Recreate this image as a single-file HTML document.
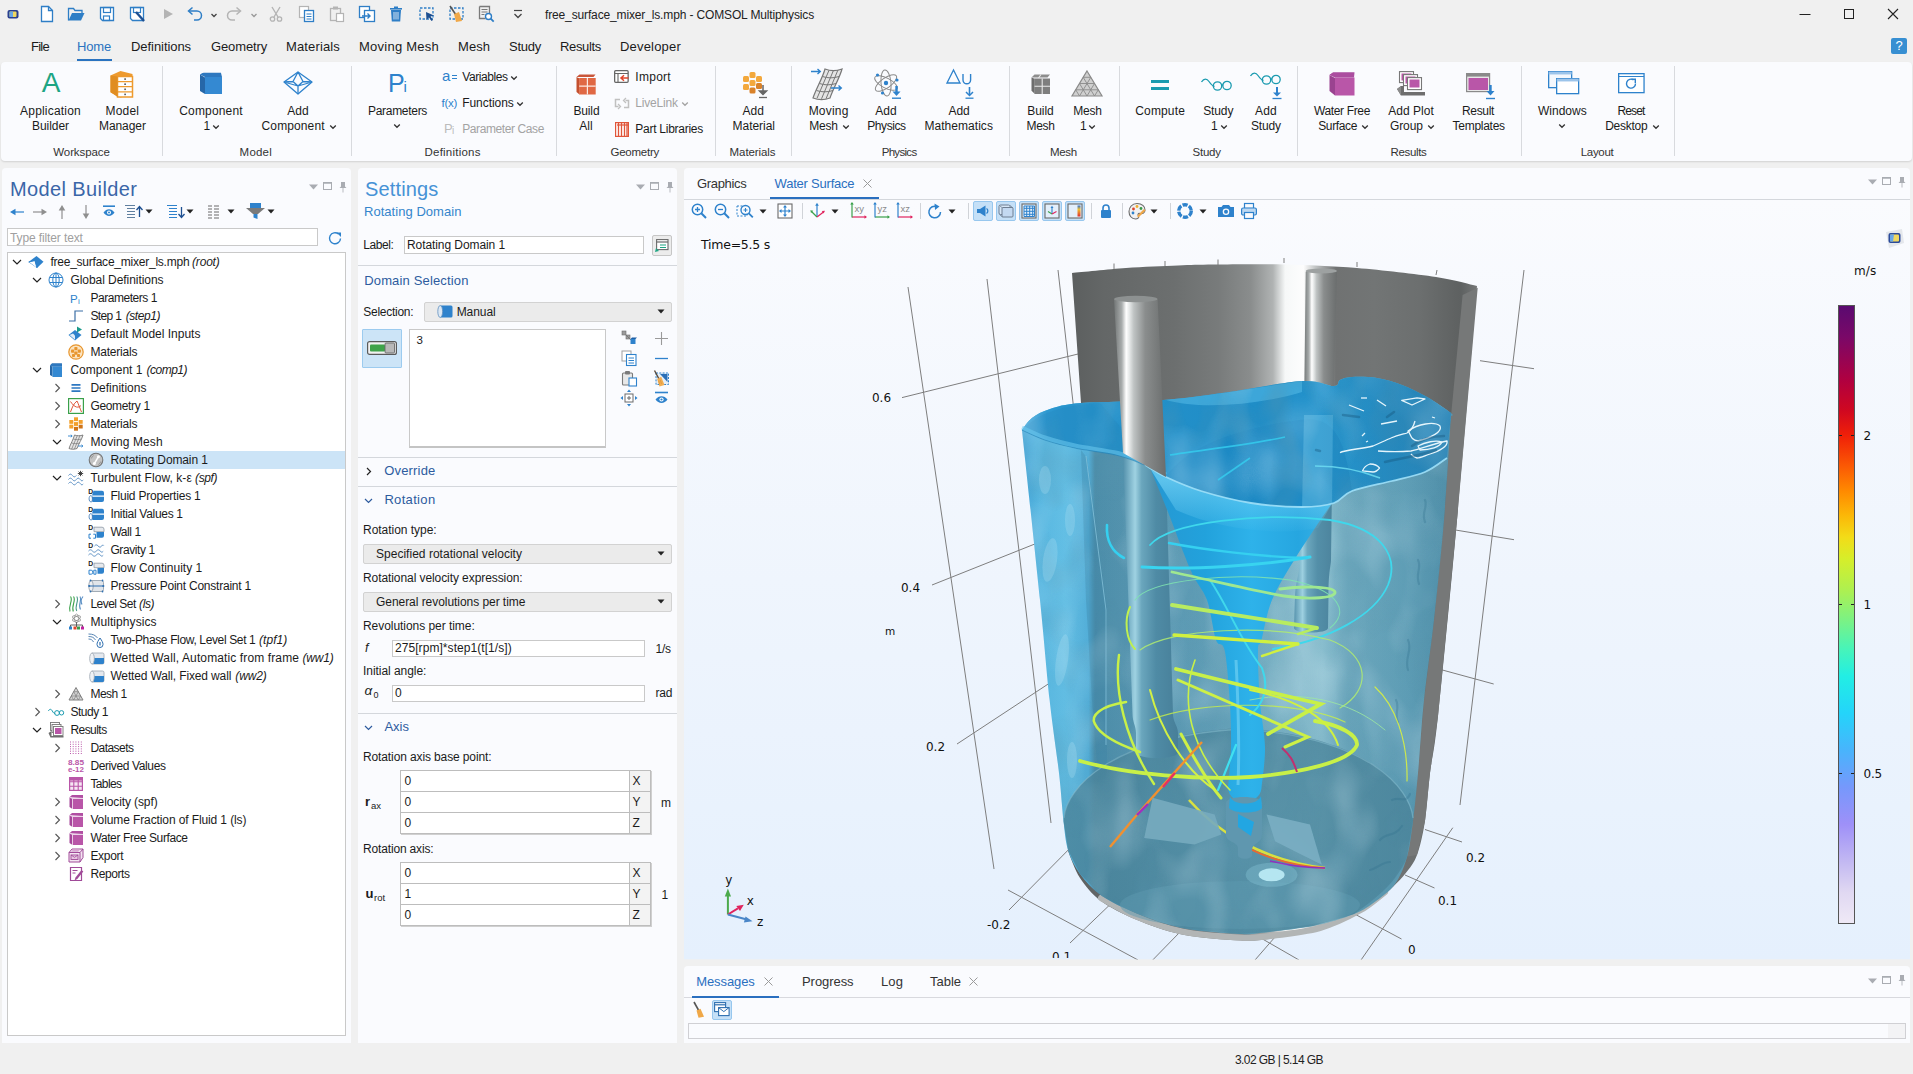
<!DOCTYPE html>
<html lang="en"><head><meta charset="utf-8"><title>free_surface_mixer_ls.mph - COMSOL Multiphysics</title>
<style>
html,body{margin:0;padding:0}
body{width:1913px;height:1074px;overflow:hidden;position:relative;background:#f0f0f0;font-family:"Liberation Sans",sans-serif;font-size:12px;line-height:16px;color:#1b1b1b}
.t{position:absolute;white-space:nowrap}
.p{position:absolute;background:#fafbfe;border-radius:4px 4px 0 0}
.hl{position:absolute;height:1px;background:#d4d7dc}
.in{position:absolute;background:#fff;border:1px solid #c9c9c9;box-sizing:border-box}
.cb{position:absolute;background:#ebebeb;border:1px solid #d2d2d2;border-radius:2px;box-sizing:border-box}
svg{overflow:visible}
</style></head>
<body>
<svg style="position:absolute;left:3px;top:4px;" width="20" height="20" viewBox="0 0 20 20"><rect x="4.500" y="6" width="11" height="8.500" rx="2" fill="#2a3f8f"/><rect x="6.500" y="7.500" width="7" height="5.500" rx="1" fill="#f0d860"/><rect x="6.500" y="7.500" width="3.500" height="5.500" fill="#6aa8e8"/></svg>
<svg style="position:absolute;left:36.5px;top:3.5px;" width="20" height="20" viewBox="0 0 20 20"><path d="M4.5 2.5h7l4 4v11h-11z" fill="#fff" stroke="#2e7ec6" stroke-width="1.3"/><path d="M11.5 2.5v4h4" fill="none" stroke="#2e7ec6" stroke-width="1.3"/></svg>
<svg style="position:absolute;left:66px;top:3.5px;" width="20" height="20" viewBox="0 0 20 20"><path d="M2.5 16.5v-12h5l1.5 2h7v2.5" fill="none" stroke="#2e7ec6" stroke-width="1.3"/><path d="M2.5 16.5l3.5-7.5h12.5l-3.5 7.5z" fill="#2e7ec6"/></svg>
<svg style="position:absolute;left:96.5px;top:3.5px;" width="20" height="20" viewBox="0 0 20 20"><path d="M3.5 3.5h13v13h-11l-2-2z" fill="#fff" stroke="#2e7ec6" stroke-width="1.3"/><rect x="6.5" y="3.5" width="7" height="5" fill="none" stroke="#2e7ec6" stroke-width="1.2"/><rect x="6.5" y="12" width="6" height="4.5" fill="none" stroke="#2e7ec6" stroke-width="1.2"/></svg>
<svg style="position:absolute;left:127px;top:3.5px;" width="20" height="20" viewBox="0 0 20 20"><path d="M3.5 3.5h13v13h-11l-2-2z" fill="#fff" stroke="#2e7ec6" stroke-width="1.3"/><rect x="6.5" y="3.5" width="7" height="5" fill="none" stroke="#2e7ec6" stroke-width="1.2"/><path d="M9 8l8 9" stroke="#1d4f91" stroke-width="2.4"/></svg>
<svg style="position:absolute;left:158px;top:3.5px;" width="20" height="20" viewBox="0 0 20 20"><path d="M6 5l9 5-9 5z" fill="#b4b4b4"/></svg>
<svg style="position:absolute;left:184.5px;top:3.5px;" width="20" height="20" viewBox="0 0 20 20"><path d="M4 7h8a4.5 4.5 0 0 1 0 9h-3" fill="none" stroke="#2e7ec6" stroke-width="1.5"/><path d="M7.5 3.5l-4 3.5 4 3.5" fill="none" stroke="#2e7ec6" stroke-width="1.5"/></svg>
<svg style="position:absolute;left:203.5px;top:4.5px;" width="20" height="20" viewBox="0 0 20 20"><path d="M7.5 9l2.5 2.5 2.5-2.5" fill="none" stroke="#444" stroke-width="1.3"/></svg>
<svg style="position:absolute;left:224px;top:3.5px;" width="20" height="20" viewBox="0 0 20 20"><path d="M16 7h-8a4.5 4.5 0 0 0 0 9h3" fill="none" stroke="#b4b4b4" stroke-width="1.5"/><path d="M12.5 3.5l4 3.5-4 3.5" fill="none" stroke="#b4b4b4" stroke-width="1.5"/></svg>
<svg style="position:absolute;left:243.5px;top:4.5px;" width="20" height="20" viewBox="0 0 20 20"><path d="M7.5 9l2.5 2.5 2.5-2.5" fill="none" stroke="#999" stroke-width="1.3"/></svg>
<svg style="position:absolute;left:266px;top:3.5px;" width="20" height="20" viewBox="0 0 20 20"><path d="M6 3l6 10M14 3l-6 10" stroke="#b4b4b4" stroke-width="1.4"/><circle cx="6.5" cy="15" r="2.2" fill="none" stroke="#b4b4b4" stroke-width="1.3"/><circle cx="13.500" cy="15" r="2.2" fill="none" stroke="#b4b4b4" stroke-width="1.3"/></svg>
<svg style="position:absolute;left:297px;top:3.5px;" width="20" height="20" viewBox="0 0 20 20"><rect x="2.500" y="2.5" width="9" height="11" fill="#fff" stroke="#b4b4b4" stroke-width="1.2"/><rect x="7.5" y="6.5" width="9" height="11" fill="#fff" stroke="#2e7ec6" stroke-width="1.3"/><path d="M9.500 10h5M9.500 12.500h5M9.500 15h5" stroke="#2e7ec6" stroke-width="1"/></svg>
<svg style="position:absolute;left:327px;top:3.5px;" width="20" height="20" viewBox="0 0 20 20"><rect x="3.5" y="4.5" width="10" height="12" fill="none" stroke="#b4b4b4" stroke-width="1.3"/><rect x="6" y="2.500" width="5" height="3" fill="#b4b4b4"/><rect x="9.500" y="9.500" width="7" height="8" fill="#fff" stroke="#b4b4b4" stroke-width="1.2"/></svg>
<svg style="position:absolute;left:357px;top:3.5px;" width="20" height="20" viewBox="0 0 20 20"><rect x="2.5" y="2.5" width="10" height="11" fill="#fff" stroke="#2e7ec6" stroke-width="1.3"/><rect x="7.5" y="6.500" width="10" height="11" fill="#fff" stroke="#2e7ec6" stroke-width="1.3"/><path d="M5 12h8M10.500 9.500l2.500 2.500-2.500 2.500" fill="none" stroke="#2e7ec6" stroke-width="1.4"/></svg>
<svg style="position:absolute;left:386px;top:3.5px;" width="20" height="20" viewBox="0 0 20 20"><path d="M5 6h10l-.8 11.500h-8.400z" fill="#2e7ec6"/><rect x="4" y="4" width="12" height="1.600" fill="#2e7ec6"/><rect x="8" y="2.500" width="4" height="1.500" fill="#2e7ec6"/><path d="M8 8v7.500M10 8v7.500M12 8v7.500" stroke="#fff" stroke-width=".8"/></svg>
<svg style="position:absolute;left:417px;top:3.5px;" width="20" height="20" viewBox="0 0 20 20"><rect x="3" y="4" width="13" height="11" fill="none" stroke="#2e7ec6" stroke-width="1.3" stroke-dasharray="2.500 1.500"/><path d="M9 8l8 3.500-3.500 1 2.500 3.500-1.500 1-2.500-3.500-2.500 2.500z" fill="#1d4f91"/></svg>
<svg style="position:absolute;left:446px;top:3.5px;" width="20" height="20" viewBox="0 0 20 20"><rect x="4" y="4" width="13" height="11" fill="none" stroke="#2e7ec6" stroke-width="1.3" stroke-dasharray="2.500 1.500"/><path d="M4 2l6 9" stroke="#555" stroke-width="1.600"/><path d="M8 10l5-2 3 9-6 1z" fill="#f0a848"/></svg>
<svg style="position:absolute;left:476px;top:3.5px;" width="20" height="20" viewBox="0 0 20 20"><path d="M3.500 2.500h10v7M3.500 2.500v12h6" fill="none" stroke="#7a7a7a" stroke-width="1.300"/><path d="M5.500 5.500h6M5.500 8h6M5.500 10.500h3" stroke="#7a7a7a" stroke-width="1"/><circle cx="12.500" cy="12.500" r="3" fill="#fff" stroke="#2e7ec6" stroke-width="1.400"/><path d="M14.700 14.700l3 3" stroke="#2e7ec6" stroke-width="1.800"/></svg>
<svg style="position:absolute;left:508px;top:3.5px;" width="20" height="20" viewBox="0 0 20 20"><path d="M6 6.500h8" stroke="#444" stroke-width="1.200"/><path d="M6.500 10l3.500 3.500 3.500-3.500" fill="none" stroke="#444" stroke-width="1.300"/></svg>
<div class="t" style="top:7px;left:545px;color:#222;letter-spacing:-0.14px;">free_surface_mixer_ls.mph - COMSOL Multiphysics</div>
<svg style="position:absolute;left:1795px;top:4px;" width="20" height="20" viewBox="0 0 20 20"><path d="M4.500 10.500h11" stroke="#222" stroke-width="1"/></svg>
<svg style="position:absolute;left:1839px;top:4px;" width="20" height="20" viewBox="0 0 20 20"><rect x="5.500" y="5.500" width="9" height="9" fill="none" stroke="#222" stroke-width="1"/></svg>
<svg style="position:absolute;left:1883px;top:4px;" width="20" height="20" viewBox="0 0 20 20"><path d="M5 5l10 10M15 5l-10 10" stroke="#222" stroke-width="1.100"/></svg>
<div class="t" style="top:37.5px;left:31px;font-size:13px;line-height:18px;color:#1b1b1b;letter-spacing:-0.74px;">File</div>
<div class="t" style="top:37.5px;left:77px;font-size:13px;line-height:18px;color:#2a73c0;letter-spacing:-0.17px;">Home</div>
<div class="t" style="top:37.5px;left:131px;font-size:13px;line-height:18px;color:#1b1b1b;letter-spacing:-0.06px;">Definitions</div>
<div class="t" style="top:37.5px;left:211px;font-size:13px;line-height:18px;color:#1b1b1b;letter-spacing:-0.13px;">Geometry</div>
<div class="t" style="top:37.5px;left:286px;font-size:13px;line-height:18px;color:#1b1b1b;letter-spacing:0.14px;">Materials</div>
<div class="t" style="top:37.5px;left:359px;font-size:13px;line-height:18px;color:#1b1b1b;letter-spacing:0.24px;">Moving Mesh</div>
<div class="t" style="top:37.5px;left:458px;font-size:13px;line-height:18px;color:#1b1b1b;letter-spacing:0.05px;">Mesh</div>
<div class="t" style="top:37.5px;left:509px;font-size:13px;line-height:18px;color:#1b1b1b;letter-spacing:-0.25px;">Study</div>
<div class="t" style="top:37.5px;left:560px;font-size:13px;line-height:18px;color:#1b1b1b;letter-spacing:-0.34px;">Results</div>
<div class="t" style="top:37.5px;left:620px;font-size:13px;line-height:18px;color:#1b1b1b;letter-spacing:0.19px;">Developer</div>
<div style="position:absolute;left:77px;top:58.5px;width:35px;height:2px;background:#2a73c0"></div>
<div style="position:absolute;left:1891px;top:38px;width:16px;height:16px;background:#378fd2;border-radius:2px;color:#fff;font-size:13px;line-height:16px;text-align:center">?</div>
<div style="position:absolute;left:1px;top:61.5px;width:1910.5px;height:99.2px;background:#fafbfe;border-radius:4px;box-shadow:0 1px 2px rgba(0,0,0,.13)"></div>
<div style="position:absolute;left:162.3px;top:66px;width:1px;height:90px;background:#d8dade"></div>
<div style="position:absolute;left:351px;top:66px;width:1px;height:90px;background:#d8dade"></div>
<div style="position:absolute;left:556px;top:66px;width:1px;height:90px;background:#d8dade"></div>
<div style="position:absolute;left:715px;top:66px;width:1px;height:90px;background:#d8dade"></div>
<div style="position:absolute;left:791px;top:66px;width:1px;height:90px;background:#d8dade"></div>
<div style="position:absolute;left:1009px;top:66px;width:1px;height:90px;background:#d8dade"></div>
<div style="position:absolute;left:1118.5px;top:66px;width:1px;height:90px;background:#d8dade"></div>
<div style="position:absolute;left:1297px;top:66px;width:1px;height:90px;background:#d8dade"></div>
<div style="position:absolute;left:1521px;top:66px;width:1px;height:90px;background:#d8dade"></div>
<div style="position:absolute;left:1674px;top:66px;width:1px;height:90px;background:#d8dade"></div>
<div class="t" style="top:144px;left:53.3px;font-size:11.5px;color:#333;letter-spacing:-0.10px;">Workspace</div>
<div class="t" style="top:144px;left:239.6px;font-size:11.5px;color:#333;letter-spacing:0.22px;">Model</div>
<div class="t" style="top:144px;left:424.5px;font-size:11.5px;color:#333;letter-spacing:0.22px;">Definitions</div>
<div class="t" style="top:144px;left:610.5px;font-size:11.5px;color:#333;letter-spacing:-0.25px;">Geometry</div>
<div class="t" style="top:144px;left:729.6px;font-size:11.5px;color:#333;letter-spacing:-0.09px;">Materials</div>
<div class="t" style="top:144px;left:881.7px;font-size:11.5px;color:#333;letter-spacing:-0.69px;">Physics</div>
<div class="t" style="top:144px;left:1050px;font-size:11.5px;color:#333;letter-spacing:-0.33px;">Mesh</div>
<div class="t" style="top:144px;left:1192.5px;font-size:11.5px;color:#333;letter-spacing:-0.22px;">Study</div>
<div class="t" style="top:144px;left:1390.6px;font-size:11.5px;color:#333;letter-spacing:-0.36px;">Results</div>
<div class="t" style="top:144px;left:1580.7px;font-size:11.5px;color:#333;letter-spacing:-0.29px;">Layout</div>
<div class="t" style="top:102.5px;left:20.1px;letter-spacing:0.19px;">Application</div>
<div class="t" style="top:117.5px;left:32px;letter-spacing:-0.05px;">Builder</div>
<div class="t" style="top:102.5px;left:105.4px;letter-spacing:0.24px;">Model</div>
<div class="t" style="top:117.5px;left:99px;letter-spacing:-0.08px;">Manager</div>
<div class="t" style="top:102.5px;left:179.3px;letter-spacing:0.15px;">Component</div>
<div class="t" style="top:117.5px;left:203.6px;letter-spacing:-1.67px;">1</div>
<div class="t" style="top:102.5px;left:287.3px;letter-spacing:-0.02px;">Add</div>
<div class="t" style="top:117.5px;left:261.6px;letter-spacing:0.11px;">Component</div>
<div class="t" style="top:102.5px;left:368px;letter-spacing:-0.30px;">Parameters</div>
<div class="t" style="top:102.5px;left:573.4px;letter-spacing:-0.12px;">Build</div>
<div class="t" style="top:117.5px;left:579.2px;letter-spacing:0.05px;">All</div>
<div class="t" style="top:102.5px;left:742.4px;letter-spacing:0.05px;">Add</div>
<div class="t" style="top:117.5px;left:732.6px;letter-spacing:-0.04px;">Material</div>
<div class="t" style="top:102.5px;left:808.7px;letter-spacing:0.19px;">Moving</div>
<div class="t" style="top:117.5px;left:809.3px;letter-spacing:-0.21px;">Mesh</div>
<div class="t" style="top:102.5px;left:875.3px;letter-spacing:0.02px;">Add</div>
<div class="t" style="top:117.5px;left:867.2px;letter-spacing:-0.41px;">Physics</div>
<div class="t" style="top:102.5px;left:948.6px;letter-spacing:-0.12px;">Add</div>
<div class="t" style="top:117.5px;left:924.4px;letter-spacing:0.05px;">Mathematics</div>
<div class="t" style="top:102.5px;left:1027.3px;letter-spacing:-0.08px;">Build</div>
<div class="t" style="top:117.5px;left:1026.4px;letter-spacing:-0.26px;">Mesh</div>
<div class="t" style="top:102.5px;left:1073.3px;letter-spacing:-0.21px;">Mesh</div>
<div class="t" style="top:117.5px;left:1080px;letter-spacing:-1.67px;">1</div>
<div class="t" style="top:102.5px;left:1135.3px;letter-spacing:0.14px;">Compute</div>
<div class="t" style="top:102.5px;left:1203.2px;letter-spacing:-0.12px;">Study</div>
<div class="t" style="top:117.5px;left:1211px;letter-spacing:-1.67px;">1</div>
<div class="t" style="top:102.5px;left:1255px;letter-spacing:0.15px;">Add</div>
<div class="t" style="top:117.5px;left:1250.9px;letter-spacing:-0.12px;">Study</div>
<div class="t" style="top:102.5px;left:1314px;letter-spacing:-0.36px;">Water Free</div>
<div class="t" style="top:117.5px;left:1318.2px;letter-spacing:-0.37px;">Surface</div>
<div class="t" style="top:102.5px;left:1388.2px;letter-spacing:0.03px;">Add Plot</div>
<div class="t" style="top:117.5px;left:1390px;letter-spacing:-0.11px;">Group</div>
<div class="t" style="top:102.5px;left:1462px;letter-spacing:-0.34px;">Result</div>
<div class="t" style="top:117.5px;left:1452.6px;letter-spacing:-0.28px;">Templates</div>
<div class="t" style="top:102.5px;left:1538px;">Windows</div>
<div class="t" style="top:102.5px;left:1617.4px;letter-spacing:-0.85px;">Reset</div>
<div class="t" style="top:117.5px;left:1605.2px;letter-spacing:-0.25px;">Desktop</div>
<svg style="position:absolute;left:212.4px;top:123.5px;" width="8" height="6" viewBox="0 0 8 6"><path d="M1.200 1.500l2.800 2.800 2.800-2.800" fill="none" stroke="#333" stroke-width="1.300"/></svg>
<svg style="position:absolute;left:328.7px;top:123.5px;" width="8" height="6" viewBox="0 0 8 6"><path d="M1.200 1.500l2.800 2.800 2.800-2.800" fill="none" stroke="#333" stroke-width="1.300"/></svg>
<svg style="position:absolute;left:393.4px;top:123px;" width="8" height="6" viewBox="0 0 8 6"><path d="M1.200 1.500l2.800 2.800 2.800-2.800" fill="none" stroke="#333" stroke-width="1.300"/></svg>
<svg style="position:absolute;left:841.7px;top:123.5px;" width="8" height="6" viewBox="0 0 8 6"><path d="M1.200 1.500l2.800 2.800 2.800-2.800" fill="none" stroke="#333" stroke-width="1.300"/></svg>
<svg style="position:absolute;left:1088.2px;top:123.5px;" width="8" height="6" viewBox="0 0 8 6"><path d="M1.200 1.500l2.800 2.800 2.800-2.800" fill="none" stroke="#333" stroke-width="1.300"/></svg>
<svg style="position:absolute;left:1219.8px;top:123.5px;" width="8" height="6" viewBox="0 0 8 6"><path d="M1.200 1.500l2.800 2.800 2.800-2.800" fill="none" stroke="#333" stroke-width="1.300"/></svg>
<svg style="position:absolute;left:1360.7px;top:123.5px;" width="8" height="6" viewBox="0 0 8 6"><path d="M1.200 1.500l2.800 2.800 2.800-2.800" fill="none" stroke="#333" stroke-width="1.300"/></svg>
<svg style="position:absolute;left:1426.9px;top:123.5px;" width="8" height="6" viewBox="0 0 8 6"><path d="M1.200 1.500l2.800 2.800 2.800-2.800" fill="none" stroke="#333" stroke-width="1.300"/></svg>
<svg style="position:absolute;left:1558px;top:123px;" width="8" height="6" viewBox="0 0 8 6"><path d="M1.200 1.500l2.800 2.800 2.800-2.800" fill="none" stroke="#333" stroke-width="1.300"/></svg>
<svg style="position:absolute;left:1651.8px;top:123.5px;" width="8" height="6" viewBox="0 0 8 6"><path d="M1.200 1.500l2.800 2.800 2.800-2.800" fill="none" stroke="#333" stroke-width="1.300"/></svg>
<div class="t" style="top:69px;left:462.2px;letter-spacing:-0.42px;">Variables</div>
<svg style="position:absolute;left:510.4px;top:75px;" width="8" height="6" viewBox="0 0 8 6"><path d="M1.200 1.500l2.800 2.800 2.800-2.800" fill="none" stroke="#333" stroke-width="1.300"/></svg>
<div class="t" style="top:95px;left:462.2px;letter-spacing:-0.05px;">Functions</div>
<svg style="position:absolute;left:516.2px;top:101px;" width="8" height="6" viewBox="0 0 8 6"><path d="M1.200 1.500l2.800 2.800 2.800-2.800" fill="none" stroke="#333" stroke-width="1.300"/></svg>
<div class="t" style="top:121px;left:462.2px;color:#a3a3a3;letter-spacing:-0.40px;">Parameter Case</div>
<div class="t" style="top:69px;left:635.3px;letter-spacing:0.28px;">Import</div>
<div class="t" style="top:95px;left:635.3px;color:#a3a3a3;letter-spacing:-0.18px;">LiveLink</div>
<svg style="position:absolute;left:680.6px;top:101px;" width="8" height="6" viewBox="0 0 8 6"><path d="M1.200 1.500l2.800 2.800 2.800-2.800" fill="none" stroke="#a3a3a3" stroke-width="1.300"/></svg>
<div class="t" style="top:121px;left:635.3px;letter-spacing:-0.26px;">Part Libraries</div>
<div class="t" style="top:68px;left:41.7px;font-size:28px;line-height:30px;color:#1ea583;">A</div>
<svg style="position:absolute;left:109px;top:70px;" width="26" height="28" viewBox="0 0 26 28"><path d="M1.500 5.500l10-4.500 12 3v20l-12 3.500-10-5z" fill="#ee9a2e"/><path d="M8.500 6.500h15v20.500h-15z" fill="#fff" stroke="#ee9a2e" stroke-width="1.500"/><path d="M8.500 11.600h15M8.500 16.700h15M8.500 21.800h15" stroke="#ee9a2e" stroke-width="1.300"/><g fill="#555"><rect x="15.300" y="8.300" width="1.600" height="1.600"/><rect x="15.300" y="13.400" width="1.600" height="1.600"/><rect x="15.300" y="18.500" width="1.600" height="1.600"/><rect x="15.300" y="23.600" width="1.600" height="1.600"/></g><path d="M1.500 5.500l7 1v20.500l-7-5z" fill="#e08d22"/></svg>
<svg style="position:absolute;left:199px;top:72px;" width="24" height="23" viewBox="0 0 24 23"><path d="M1 2.500l3.500-1.800h17.500v3z" fill="#2b6fb5"/><path d="M1 2.500l5 3v16.500l-5-3z" fill="#2667a8"/><rect x="6" y="5" width="17" height="17" fill="#3489d2"/><path d="M1 2.500l3-1.500h18l1 4h-17z" fill="#2e78bf"/></svg>
<svg style="position:absolute;left:283px;top:71px;" width="30" height="24" viewBox="0 0 30 24"><g fill="none" stroke="#2e82cc" stroke-width="1.300" stroke-linejoin="round"><path d="M15 1l14 10-14 12-14-12z"/><path d="M1 11l14 4 14-4M15 15v8M15 1l-5 9.500M15 1l5 9.500M10 10.500l5 4.500 5-4.500M10 10.500l-9 .5M20 10.500l9 .5"/></g></svg>
<div class="t" style="top:68.5px;left:388px;font-size:25px;line-height:28px;color:#2e82cc;">P</div>
<div class="t" style="top:78px;left:403.5px;font-size:15px;line-height:18px;color:#2e82cc;">i</div>
<div class="t" style="top:68px;left:442px;font-size:15px;color:#2e82cc;">a</div>
<div style="position:absolute;left:451.5px;top:74.5px;width:5px;height:1.3px;background:#2e82cc"></div>
<div style="position:absolute;left:451.5px;top:78.2px;width:5px;height:1.3px;background:#2e82cc"></div>
<div class="t" style="top:95px;left:441.5px;font-size:11.5px;color:#2e82cc;letter-spacing:-0.28px;">f(x)</div>
<div class="t" style="top:121px;left:444px;font-size:13px;color:#bcbcbc;">P</div>
<div class="t" style="top:123px;left:452px;font-size:10px;color:#bcbcbc;">i</div>
<svg style="position:absolute;left:576px;top:74px;" width="20" height="21" viewBox="0 0 20 21"><path d="M.500 3l3-2.500h16l-2 2.500z" fill="#c9563a"/><path d="M.500 3l3 1.500v16l-3-2.500z" fill="#c4502f"/><rect x="3.200" y="4" width="16.500" height="16.500" fill="#e06844"/><path d="M11.400 4v16.500M3.200 12.200h16.500" stroke="#fbe9e2" stroke-width="1.200"/></svg>
<svg style="position:absolute;left:614px;top:70px;" width="15" height="14" viewBox="0 0 15 14"><rect x=".650" y=".650" width="13.500" height="11.700" rx="1" fill="#fff" stroke="#666" stroke-width="1.300"/><path d="M.650 3.500h13.500M4 3.500v9" stroke="#666" stroke-width="1.100"/><path d="M14.500 8h-7M10 5.300l-3 2.700 3 2.700" fill="none" stroke="#e0452c" stroke-width="1.500"/></svg>
<svg style="position:absolute;left:614px;top:97px;" width="16" height="13" viewBox="0 0 16 13"><g fill="none" stroke="#c0c0c0" stroke-width="1.500"><path d="M6 2.500h-4.500v7h3"/><path d="M10 10.500h4.500v-7h-3"/><path d="M4 7l2.500 2.500-2.500 2.500M12 6l-2.500-2.500 2.500-2.500" stroke-width="1.300"/></g></svg>
<svg style="position:absolute;left:615px;top:122px;" width="14" height="15" viewBox="0 0 14 15"><rect x=".600" y=".600" width="12.800" height="13.800" fill="#fff" stroke="#e0553a" stroke-width="1.200"/><path d="M3.500 1v13M6.500 1v13M9.500 1v13M12 1v13" stroke="#e0553a" stroke-width="1.300"/><path d="M2 3h11" stroke="#e0553a" stroke-width="1.200"/></svg>
<svg style="position:absolute;left:742px;top:72px;" width="26" height="27" viewBox="0 0 26 27"><g fill="#f3a83c"><rect x="7.500" y="0" width="6" height="6" rx="1.500"/><rect x="1" y="4" width="6" height="6" rx="1.500"/><rect x="14" y="4" width="6" height="6" rx="1.500"/><rect x="7.500" y="8" width="6" height="6" rx="1.500"/><rect x="1" y="12" width="6" height="6" rx="1.500"/></g><g fill="#d9822a"><rect x="14" y="11" width="6" height="6" rx="1.500"/><rect x="7.500" y="15.500" width="6" height="6" rx="1.500"/></g><path d="M21 13v9M17.500 19l3.500 3.500 3.500-3.500z" stroke="#666" stroke-width="1.500" fill="#666"/><path d="M17 25.500h8" stroke="#666" stroke-width="1.300"/></svg>
<svg style="position:absolute;left:811px;top:68px;" width="32" height="31" viewBox="0 0 32 31"><path d="M14 1c5 2 12 2 17 0-2 8-9 20-12 29-5 2-12 2-17 0 3-9 10-21 12-29z" fill="#e4e4e4" stroke="#777" stroke-width="1.200"/><path d="M18 2.300l-12 28M22.500 2.300l-12 28.500M27 1.800l-12 29M11.500 8.500c5 1.800 11 1.800 16.500 0M8.500 15.500c5 1.800 11 1.800 16.500 0M5.500 22.500c5 1.800 11 1.800 16.500 0" fill="none" stroke="#777" stroke-width="1"/><path d="M0 3.500h9M6.500 1l2.800 2.500-2.800 2.500M20 20h10M27.500 17.500l2.800 2.500-2.800 2.500" fill="none" stroke="#2e82cc" stroke-width="1.400"/></svg>
<svg style="position:absolute;left:873px;top:69px;" width="29" height="30" viewBox="0 0 29 30"><g fill="none" stroke="#8a8a8a" stroke-width="1"><ellipse cx="13" cy="14" rx="12.500" ry="5" transform="rotate(28 13 14)"/><ellipse cx="13" cy="14" rx="12.500" ry="5" transform="rotate(-35 13 14)"/><ellipse cx="13" cy="14" rx="5" ry="13" transform="rotate(-5 13 14)"/></g><g fill="#2e82cc"><circle cx="13" cy="14" r="2.200"/><circle cx="4.500" cy="6" r="1.600"/><circle cx="24" cy="11" r="1.600"/><circle cx="9.500" cy="24" r="1.600"/></g><path d="M23.500 17v8" stroke="#2e82cc" stroke-width="2.400"/><path d="M19.500 22.500h8l-4 4.500z" fill="#2e82cc"/><path d="M19 29.200h9" stroke="#2e82cc" stroke-width="1.400"/></svg>
<svg style="position:absolute;left:946px;top:69px;" width="28" height="30" viewBox="0 0 28 30"><path d="M1 14l6.500-13 6.500 13z" fill="none" stroke="#2e82cc" stroke-width="1.300"/><path d="M17 5v6a3.800 3.800 0 0 0 7.600 0v-6" fill="none" stroke="#2e82cc" stroke-width="1.400"/><path d="M23.500 18v8" stroke="#2e82cc" stroke-width="1.600"/><path d="M20 23l3.500 3.500 3.500-3.500" fill="none" stroke="#2e82cc" stroke-width="1.500"/><path d="M19.500 29.200h8" stroke="#2e82cc" stroke-width="1.300"/></svg>
<svg style="position:absolute;left:1031px;top:74px;" width="20" height="20" viewBox="0 0 20 20"><path d="M.500 3.500l3-3h15.500l-2.500 3z" fill="#8d8d8d"/><path d="M.500 3.500l3.200 1.300v15l-3.200-3z" fill="#6d6d6d"/><rect x="3.500" y="4.500" width="15.500" height="15.500" fill="#7e7e7e"/><path d="M11.200 4.500v15.500M3.500 12.200h15.500M10 .500l-2.500 3.500" stroke="#e9e9e9" stroke-width="1.100"/></svg>
<svg style="position:absolute;left:1071px;top:70px;" width="32" height="27" viewBox="0 0 32 27"><path d="M16 1l15 25h-30z" fill="#cfcfcf" stroke="#8a8a8a" stroke-width="1.200"/><g stroke="#8a8a8a" stroke-width=".900" fill="none"><path d="M12.200 7.300h7.600M8.500 13.500h15M4.700 19.800h22.600"/><path d="M12.200 7.300l11.300 18.700M8.500 13.500l7.500 12.500M4.700 19.800l3.800 6.200M19.800 7.300l-11.300 18.700M23.500 13.500l-7.500 12.500M27.300 19.800l-3.800 6.200"/></g></svg>
<div style="position:absolute;left:1151px;top:79.5px;width:18px;height:3.6px;background:#1b9bb0"></div>
<div style="position:absolute;left:1151px;top:86.5px;width:18px;height:3.6px;background:#1b9bb0"></div>
<svg style="position:absolute;left:1201px;top:78px;" width="31" height="13" viewBox="0 0 31 13"><g fill="none" stroke="#1b9bb0" stroke-width="1.300"><path d="M.500 4c2.500-4 5.500-3.500 7.500-.500s3.500 4.500 5.500 5"/><circle cx="16.500" cy="8" r="4.200"/><circle cx="26" cy="7.500" r="4.200"/><path d="M20.700 7.500c.500-.800 1-.800 1.300 0"/></g></svg>
<svg style="position:absolute;left:1250px;top:72px;" width="31" height="13" viewBox="0 0 31 13"><g fill="none" stroke="#1b9bb0" stroke-width="1.300"><path d="M.500 4c2.500-4 5.500-3.500 7.500-.500s3.500 4.500 5.500 5"/><circle cx="16.500" cy="8" r="4.200"/><circle cx="26" cy="7.500" r="4.200"/><path d="M20.700 7.500c.500-.800 1-.800 1.300 0"/></g></svg>
<svg style="position:absolute;left:1271px;top:87px;" width="12" height="13" viewBox="0 0 12 13"><path d="M6 0v7" stroke="#2e82cc" stroke-width="2"/><path d="M2 5.500h8l-4 4z" fill="#2e82cc"/><path d="M1.500 11.500h9" stroke="#2e82cc" stroke-width="1.300"/></svg>
<svg style="position:absolute;left:1329px;top:71.5px;" width="26" height="24" viewBox="0 0 26 24"><path d="M.500 3l3.500-2.500h21.500l-3 3z" fill="#a04a98"/><path d="M.500 3l5.500 3v17.500l-5.500-4.500z" fill="#9a4390"/><rect x="6" y="5.500" width="19.500" height="18" fill="#b956a8"/><path d="M.500 3l3.500-2.500h21.500l-.500 5h-19z" fill="#ab4d9f"/></svg>
<svg style="position:absolute;left:1396px;top:71px;" width="30" height="25" viewBox="0 0 30 25"><path d="M1 18l4-3h3v6h21v3.500h-24z" fill="#6e6e6e"/><path d="M1 18l4 6.500v-9.500z" fill="#8a8a8a"/><g stroke="#777" stroke-width="1.100"><rect x="3.500" y=".600" width="14" height="11" fill="#fff"/><rect x="5.500" y="2.500" width="10" height="7" fill="#b956a8" stroke="none"/><rect x="7.500" y="3.600" width="14" height="11" fill="#fff"/><rect x="9.500" y="5.500" width="10" height="7" fill="#b956a8" stroke="none"/><rect x="11.500" y="6.600" width="14" height="12" fill="#fff"/><rect x="13.500" y="8.500" width="10" height="8" fill="#b956a8" stroke="none"/></g></svg>
<svg style="position:absolute;left:1466px;top:73px;" width="30" height="27" viewBox="0 0 30 27"><rect x=".600" y=".600" width="23" height="18" fill="#e8e8e8" stroke="#8a8a8a" stroke-width="1.200"/><rect x=".600" y=".600" width="23" height="3" fill="#8a8a8a"/><rect x="2.500" y="5" width="19.500" height="12" fill="#b956a8"/><path d="M24.500 12v9" stroke="#2e82cc" stroke-width="2.400"/><path d="M20.500 18h8l-4 4.500z" fill="#2e82cc"/><path d="M20 25.500h9" stroke="#2e82cc" stroke-width="1.400"/></svg>
<svg style="position:absolute;left:1548px;top:71px;" width="32" height="24" viewBox="0 0 32 24"><rect x=".650" y=".650" width="23" height="16" fill="#f4f8fd" stroke="#2e82cc" stroke-width="1.300"/><rect x=".650" y=".650" width="23" height="2.800" fill="#9cc4ea"/><rect x="8.650" y="7.650" width="22" height="15" fill="#fff" stroke="#2e82cc" stroke-width="1.300"/><rect x="8.650" y="7.650" width="22" height="2.800" fill="#9cc4ea"/></svg>
<svg style="position:absolute;left:1618px;top:73px;" width="27" height="21" viewBox="0 0 27 21"><rect x=".650" y=".650" width="25.400" height="19" fill="#fff" stroke="#2e82cc" stroke-width="1.300"/><path d="M.650 3.500h25.400" stroke="#2e82cc" stroke-width="1"/><path d="M17.500 10.500a4.500 4.500 0 1 1-2-3.600" fill="none" stroke="#2e82cc" stroke-width="1.400"/><path d="M13.500 6.200h3.800v3.800" fill="none" stroke="#2e82cc" stroke-width="1.400"/></svg>
<div class="p" style="position:absolute;left:2px;top:167.7px;width:349px;height:875.3px;"></div>
<div class="t" style="top:175.5px;left:10px;font-size:20px;line-height:26px;color:#3a66a8;letter-spacing:0.39px;">Model Builder</div>
<svg style="position:absolute;left:309px;top:184px;" width="9" height="6" viewBox="0 0 9 6"><path d="M0 .500h9l-4.500 5z" fill="#a9acb2"/></svg><svg style="position:absolute;left:323px;top:182px;" width="9" height="9" viewBox="0 0 9 9"><rect x=".500" y=".500" width="8" height="7" fill="none" stroke="#a9acb2" stroke-width="1"/><path d="M.500 1h8" stroke="#a9acb2" stroke-width="1.500"/></svg><svg style="position:absolute;left:339px;top:181.5px;" width="8" height="11" viewBox="0 0 8 11"><path d="M2 0h4v4.500l1.500 1.500h-7l1.500-1.500zM3.600 6h.800v4.500h-.800z" fill="#a9acb2"/></svg>
<svg style="position:absolute;left:9px;top:203.5px;" width="16" height="16" viewBox="0 0 16 16"><path d="M15 8h-10" fill="none" stroke="#2e82cc" stroke-width="1.200"/><path d="M6.500 4.700l-5.500 3.300 5.500 3.300z" fill="#2e82cc"/></svg>
<svg style="position:absolute;left:32px;top:203.5px;" width="16" height="16" viewBox="0 0 16 16"><path d="M1 8h10" fill="none" stroke="#8f8f8f" stroke-width="1.200"/><path d="M9.500 4.700l5.500 3.300-5.500 3.300z" fill="#8f8f8f"/></svg>
<svg style="position:absolute;left:54px;top:203.5px;" width="16" height="16" viewBox="0 0 16 16"><path d="M8 15v-10" fill="none" stroke="#8f8f8f" stroke-width="1.200"/><path d="M4.700 6.500l3.300-5.500 3.300 5.500z" fill="#8f8f8f"/></svg>
<svg style="position:absolute;left:77.5px;top:203.5px;" width="16" height="16" viewBox="0 0 16 16"><path d="M8 1v10" fill="none" stroke="#8f8f8f" stroke-width="1.200"/><path d="M4.700 9.500l3.300 5.500 3.300-5.500z" fill="#8f8f8f"/></svg>
<svg style="position:absolute;left:102px;top:205px;" width="14" height="12" viewBox="0 0 14 12"><path d="M1 1.200h12" stroke="#2e82cc" stroke-width="1.600"/><path d="M1.500 7.500c3-4.500 8-4.500 11 0-3 4.500-8 4.500-11 0z" fill="#2e82cc"/><circle cx="7" cy="7.500" r="2" fill="#fff"/><circle cx="7" cy="7.500" r="1" fill="#2e82cc"/></svg>
<svg style="position:absolute;left:124px;top:204px;" width="20" height="15" viewBox="0 0 20 15"><path d="M1 1.500h10M3 4.500h8M3 7.500h8M3 10.500h8M3 13.500h8" stroke="#5f7f9f" stroke-width="1.100"/><path d="M15.500 13v-10M12.500 6l3-3.500 3 3.500" fill="none" stroke="#1d4f91" stroke-width="1.300"/></svg>
<svg style="position:absolute;left:145px;top:209px;" width="8" height="5" viewBox="0 0 8 5"><path d="M.500 .500h7l-3.500 4z" fill="#222"/></svg>
<svg style="position:absolute;left:166px;top:204px;" width="20" height="15" viewBox="0 0 20 15"><path d="M1 1.500h10M3 4.500h8M3 7.500h8M3 10.500h8M3 13.500h8" stroke="#2e82cc" stroke-width="1.100"/><path d="M15.500 3v10M12.500 10l3 3.500 3-3.500" fill="none" stroke="#1d4f91" stroke-width="1.300"/></svg>
<svg style="position:absolute;left:186.4px;top:209px;" width="8" height="5" viewBox="0 0 8 5"><path d="M.500 .500h7l-3.500 4z" fill="#222"/></svg>
<svg style="position:absolute;left:207px;top:204px;" width="13" height="15" viewBox="0 0 13 15"><path d="M1 2h4M7 2h5M1 5h4M7 5h5M1 8h4M7 8h5M1 11h4M7 11h5M1 14h4M7 14h5" stroke="#6a6a6a" stroke-width="1.200"/></svg>
<svg style="position:absolute;left:226.6px;top:209px;" width="8" height="5" viewBox="0 0 8 5"><path d="M.500 .500h7l-3.500 4z" fill="#222"/></svg>
<svg style="position:absolute;left:246px;top:203px;" width="19" height="17" viewBox="0 0 19 17"><path d="M0 5h19l-7 6h-5z" fill="#7a7a7a"/><path d="M4 0h11v5h-11z" fill="#2e82cc"/><path d="M7.500 11h4v5l-4-1.500z" fill="#2e82cc"/></svg>
<svg style="position:absolute;left:266.9px;top:209px;" width="8" height="5" viewBox="0 0 8 5"><path d="M.500 .500h7l-3.500 4z" fill="#222"/></svg>
<div class="in" style="position:absolute;left:7px;top:228px;width:311px;height:18px;"></div>
<div class="t" style="top:229.5px;left:10px;color:#a0a0a0;letter-spacing:-0.12px;">Type filter text</div>
<svg style="position:absolute;left:327px;top:229px;" width="17" height="17" viewBox="0 0 17 17"><path d="M13.500 9.500a5.500 5.500 0 1 1-2-4.500" fill="none" stroke="#2e82cc" stroke-width="1.400"/><path d="M9.500 3.500h4.500v4.500z" fill="#2e82cc"/></svg>
<div class="in" style="position:absolute;left:7px;top:252px;width:339px;height:784px;"></div>
<div style="position:absolute;left:8px;top:451px;width:337px;height:17.5px;background:#cce4f7"></div>
<svg style="position:absolute;left:12.4px;top:257.5px;" width="10" height="8" viewBox="0 0 10 8"><path d="M1 2l4 4 4-4" fill="none" stroke="#222" stroke-width="1.200"/></svg>
<svg style="position:absolute;left:28px;top:253.5px;" width="16" height="16" viewBox="0 0 16 16"><path d="M8.500 2l7 5.800-6.500 6.200-8.500-6z" fill="#2e82cc"/><path d="M1.200 8l5.600-1.300 2 7z" fill="#fff"/><path d="M.700 8l6.200-1.500 2.100 7.500" fill="none" stroke="#2e82cc" stroke-width="1"/><path d="M6.900 6.500l1.600-4.500" stroke="#fff" stroke-width=".600" opacity=".0"/></svg>
<div class="t" style="top:253.5px;left:50.4px;letter-spacing:-0.23px;">free_surface_mixer_ls.mph</div>
<div class="t" style="top:253.5px;left:192px;font-style:italic;letter-spacing:-0.18px;">(root)</div>
<svg style="position:absolute;left:32.4px;top:275.5px;" width="10" height="8" viewBox="0 0 10 8"><path d="M1 2l4 4 4-4" fill="none" stroke="#222" stroke-width="1.200"/></svg>
<svg style="position:absolute;left:48px;top:271.5px;" width="16" height="16" viewBox="0 0 16 16"><g fill="none" stroke="#2e82cc" stroke-width="1"><circle cx="8" cy="8" r="7"/><ellipse cx="8" cy="8" rx="3.200" ry="7"/><path d="M8 1v14M1.500 5.500h13M1.500 10.500h13"/></g></svg>
<div class="t" style="top:271.5px;left:70.4px;letter-spacing:-0.05px;">Global Definitions</div>
<svg style="position:absolute;left:68px;top:289.5px;" width="16" height="16" viewBox="0 0 16 16"><text x="2" y="12.500" font-size="11.500" font-family="Liberation Sans,sans-serif" fill="#2e82cc">P</text><text x="10" y="13.500" font-size="8" font-family="Liberation Sans,sans-serif" fill="#2e82cc">i</text></svg>
<div class="t" style="top:289.5px;left:90.4px;letter-spacing:-0.46px;">Parameters 1</div>
<svg style="position:absolute;left:68px;top:307.5px;" width="16" height="16" viewBox="0 0 16 16"><path d="M1 13h6v-10h8" fill="none" stroke="#3b6ea5" stroke-width="1.200"/></svg>
<div class="t" style="top:307.5px;left:90.4px;letter-spacing:-0.62px;">Step 1</div>
<div class="t" style="top:307.5px;left:125.7px;font-style:italic;letter-spacing:-0.41px;">(step1)</div>
<svg style="position:absolute;left:68px;top:325.5px;" width="16" height="16" viewBox="0 0 16 16"><path d="M7 4l6.500 5-6.500 5.500-6.500-5.500z" fill="#2e82cc"/><path d="M5 7.500l-3.500 1.500 5.500 4.800v-4.300z" fill="#fff" opacity=".85"/><path d="M9 .500l5 3-5 3z" fill="#1a9a8a"/></svg>
<div class="t" style="top:325.5px;left:90.4px;">Default Model Inputs</div>
<svg style="position:absolute;left:68px;top:343.5px;" width="16" height="16" viewBox="0 0 16 16"><circle cx="8" cy="8" r="7.200" fill="#fbe3c0" stroke="#e8962e" stroke-width="1.200"/><g fill="#e8962e"><rect x="6.300" y="3" width="3.200" height="3.200" rx=".800"/><rect x="3" y="5.500" width="3.200" height="3.200" rx=".800"/><rect x="9.700" y="5.500" width="3.200" height="3.200" rx=".800"/><rect x="6.300" y="7.500" width="3.200" height="3.200" rx=".800"/><rect x="4" y="10" width="3" height="3" rx=".800"/><rect x="9" y="10" width="3" height="3" rx=".800"/></g></svg>
<div class="t" style="top:343.5px;left:90.4px;letter-spacing:-0.19px;">Materials</div>
<svg style="position:absolute;left:32.4px;top:365.5px;" width="10" height="8" viewBox="0 0 10 8"><path d="M1 2l4 4 4-4" fill="none" stroke="#222" stroke-width="1.200"/></svg>
<svg style="position:absolute;left:48px;top:361.5px;" width="16" height="16" viewBox="0 0 16 16"><path d="M2 3.500l2-2h10l-1.500 2z" fill="#2667a8"/><path d="M2 3.500l2.500 1v10l-2.500-1.500z" fill="#2667a8"/><rect x="4.500" y="4.300" width="9.500" height="10.700" fill="#3489d2"/><path d="M2 3.500l2-2h10v3h-9.500z" fill="#2e78bf"/></svg>
<div class="t" style="top:361.5px;left:70.4px;">Component 1</div>
<div class="t" style="top:361.5px;left:146.5px;font-style:italic;letter-spacing:-0.50px;">(comp1)</div>
<svg style="position:absolute;left:53.9px;top:382.5px;" width="8" height="10" viewBox="0 0 8 10"><path d="M1.500 1l4 4-4 4" fill="none" stroke="#555" stroke-width="1.100"/></svg>
<svg style="position:absolute;left:68px;top:379.5px;" width="16" height="16" viewBox="0 0 16 16"><path d="M3.500 4.800h9M3.500 8h9M3.500 11.200h9" stroke="#2d78c2" stroke-width="1.700"/></svg>
<div class="t" style="top:379.5px;left:90.4px;">Definitions</div>
<svg style="position:absolute;left:53.9px;top:400.5px;" width="8" height="10" viewBox="0 0 8 10"><path d="M1.500 1l4 4-4 4" fill="none" stroke="#555" stroke-width="1.100"/></svg>
<svg style="position:absolute;left:68px;top:397.5px;" width="16" height="16" viewBox="0 0 16 16"><rect x=".600" y=".600" width="14.800" height="14.800" fill="#fff" stroke="#3aa04a" stroke-width="1.200"/><path d="M2.500 14c1.500-4 3-8.500 6.500-11 1.500 3 3 7.500 4.500 11M2.500 3.500c2 3 4 5 6 5.500s3.500-.500 4.500-1.500" fill="none" stroke="#e0553a" stroke-width="1"/></svg>
<div class="t" style="top:397.5px;left:90.4px;letter-spacing:-0.33px;">Geometry 1</div>
<svg style="position:absolute;left:53.9px;top:418.5px;" width="8" height="10" viewBox="0 0 8 10"><path d="M1.500 1l4 4-4 4" fill="none" stroke="#555" stroke-width="1.100"/></svg>
<svg style="position:absolute;left:68px;top:415.5px;" width="16" height="16" viewBox="0 0 16 16"><g fill="#f3a02c"><rect x="6" y="1.300" width="4" height="3.800"/><rect x="1.300" y="4" width="4" height="3.800"/><rect x="10.700" y="4" width="4" height="3.800"/><rect x="6" y="6.100" width="4" height="3.800"/><rect x="1.300" y="8.700" width="4" height="3.800"/></g><g fill="#cf7418"><rect x="10.700" y="8.700" width="4" height="3.800"/><rect x="6" y="10.900" width="4" height="3.800"/></g></svg>
<div class="t" style="top:415.5px;left:90.4px;letter-spacing:-0.19px;">Materials</div>
<svg style="position:absolute;left:52.4px;top:437.5px;" width="10" height="8" viewBox="0 0 10 8"><path d="M1 2l4 4 4-4" fill="none" stroke="#222" stroke-width="1.200"/></svg>
<svg style="position:absolute;left:68px;top:433.5px;" width="16" height="16" viewBox="0 0 16 16"><path d="M6.500 1c3 1 5.500 1 8.500 0-1 4-4.500 9-6 13.500-3 1-5.500 1-8 0 1.500-4.500 4.500-9.500 5.500-13.500z" fill="#e4e4e4" stroke="#777" stroke-width=".900"/><path d="M9.300 1.600l-5.600 13.400M12 1.500l-5.600 13.600M5.300 5c3 .900 5.500.900 8 0M3.700 9c3 .900 5.500.900 8 0" fill="none" stroke="#777" stroke-width=".700"/><path d="M0 2h4M2.800 .800l1.400 1.200-1.400 1.200M10 12h5M13.500 10.800l1.400 1.200-1.400 1.200" fill="none" stroke="#2e82cc" stroke-width=".900"/></svg>
<div class="t" style="top:433.5px;left:90.4px;letter-spacing:0.08px;">Moving Mesh</div>
<svg style="position:absolute;left:88px;top:451.5px;" width="16" height="16" viewBox="0 0 16 16"><circle cx="8" cy="8" r="6.800" fill="#c4c4c4" stroke="#757575" stroke-width="1.100"/><path d="M10.300 4.800l-3.800 6.500" stroke="#fff" stroke-width="1.600"/><circle cx="10.400" cy="4.700" r="1.500" fill="#fff"/><circle cx="6.300" cy="11.500" r="1.500" fill="#fff"/><path d="M3.300 6.500a5 5 0 0 1 2.400-3M12.800 9.500a5 5 0 0 1-2.400 3" fill="none" stroke="#8a8a8a" stroke-width=".800"/></svg>
<div class="t" style="top:451.5px;left:110.4px;letter-spacing:-0.12px;">Rotating Domain 1</div>
<svg style="position:absolute;left:52.4px;top:473.5px;" width="10" height="8" viewBox="0 0 10 8"><path d="M1 2l4 4 4-4" fill="none" stroke="#222" stroke-width="1.200"/></svg>
<svg style="position:absolute;left:68px;top:469.5px;" width="16" height="16" viewBox="0 0 16 16"><g fill="none" stroke="#5a8fc4" stroke-width="1"><path d="M.500 5.500c1.300-1.800 2.600-1.800 3.900 0s2.600 1.800 3.900 0"/><path d="M.500 9.500c1.300-1.800 2.600-1.800 3.900 0s2.600 1.800 3.900 0 2.600-1.800 3.900 0 2 1.500 3 .500"/><path d="M.500 13.500c1.300-1.800 2.600-1.800 3.900 0s2.600 1.800 3.900 0 2.600-1.800 3.900 0 2 1.500 3 .500"/></g><g stroke="#333" stroke-width=".900"><path d="M12.500 .800v5.400M9.800 3.500h5.400M10.600 1.600l3.800 3.800M14.400 1.600l-3.800 3.800"/></g></svg>
<div class="t" style="top:469.5px;left:90.4px;letter-spacing:0.06px;">Turbulent Flow, k-ε</div>
<div class="t" style="top:469.5px;left:195px;font-style:italic;letter-spacing:-0.36px;">(spf)</div>
<svg style="position:absolute;left:88px;top:487.5px;" width="16" height="16" viewBox="0 0 16 16"><text x=".300" y="6.300" font-size="6.800" font-weight="700" font-family="Liberation Sans,sans-serif" fill="#222">D</text><path d="M5.500 2.800h8.500q2 0 2 2v2.700h-12z" fill="#2e82cc"/><path d="M3 8.800h13v3.200q0 2-2 2h-9.500z" fill="#2e82cc"/><path d="M3.200 7.500c-2.800 0-2.800 6.500 0 6.500c1.300 0 1.800-5.200 0-6.500z" fill="#fff" stroke="#2e6fb0" stroke-width=".800"/></svg>
<div class="t" style="top:487.5px;left:110.4px;letter-spacing:-0.22px;">Fluid Properties 1</div>
<svg style="position:absolute;left:88px;top:505.5px;" width="16" height="16" viewBox="0 0 16 16"><text x=".300" y="6.300" font-size="6.800" font-weight="700" font-family="Liberation Sans,sans-serif" fill="#222">D</text><path d="M5.500 2.800h8.500q2 0 2 2v2.700h-12z" fill="#2e82cc"/><path d="M3 8.800h13v3.200q0 2-2 2h-9.500z" fill="#2e82cc"/><path d="M3.200 7.500c-2.800 0-2.800 6.500 0 6.500c1.300 0 1.800-5.200 0-6.500z" fill="#fff" stroke="#2e6fb0" stroke-width=".800"/></svg>
<div class="t" style="top:505.5px;left:110.4px;letter-spacing:-0.30px;">Initial Values 1</div>
<svg style="position:absolute;left:88px;top:523.5px;" width="16" height="16" viewBox="0 0 16 16"><text x=".300" y="6.300" font-size="6.800" font-weight="700" font-family="Liberation Sans,sans-serif" fill="#222">D</text><path d="M6 3.200h8q2 0 2 2v2.500h-10z" fill="#e6e9ed" stroke="#8d98a5" stroke-width=".800"/><path d="M8.500 8h7.500v3.800q0 2-2 2h-5.500z" fill="#2e82cc"/><path d="M3 10.200h-2v4h2M5.300 10.200h2.200v4h-2.200" fill="none" stroke="#2e82cc" stroke-width="1"/></svg>
<div class="t" style="top:523.5px;left:110.4px;letter-spacing:-0.42px;">Wall 1</div>
<svg style="position:absolute;left:88px;top:541.5px;" width="16" height="16" viewBox="0 0 16 16"><text x=".300" y="6.300" font-size="6.800" font-weight="700" font-family="Liberation Sans,sans-serif" fill="#222">D</text><g fill="none" stroke="#5a8fc4" stroke-width="1"><path d="M6.500 4c1.200-1.500 2.400-1.500 3.600 0s2.400 1.500 3.600 0 1.500-1 2-.500"/><path d="M.500 9c1.300-1.600 2.600-1.600 3.900 0s2.600 1.600 3.900 0 2.600-1.600 3.900 0 2 1.300 3 .300"/><path d="M.500 13c1.300-1.600 2.600-1.600 3.900 0s2.600 1.600 3.900 0 2.600-1.600 3.900 0 2 1.300 3 .300"/></g></svg>
<div class="t" style="top:541.5px;left:110.4px;letter-spacing:-0.39px;">Gravity 1</div>
<svg style="position:absolute;left:88px;top:559.5px;" width="16" height="16" viewBox="0 0 16 16"><text x=".300" y="6.300" font-size="6.800" font-weight="700" font-family="Liberation Sans,sans-serif" fill="#222">D</text><path d="M6 3.200h8q2 0 2 2v2.500h-10z" fill="#e6e9ed" stroke="#8d98a5" stroke-width=".800"/><path d="M9.500 8h6.500v3.800q0 2-2 2h-4.500z" fill="#2e82cc"/><path d="M1 10.200h2.200q1.600 0 1.600 2t-1.600 2h-2.200zM5.800 10.200h2.200v4h-2.200z" fill="none" stroke="#2e82cc" stroke-width="1"/></svg>
<div class="t" style="top:559.5px;left:110.4px;letter-spacing:-0.02px;">Flow Continuity 1</div>
<svg style="position:absolute;left:88px;top:577.5px;" width="16" height="16" viewBox="0 0 16 16"><path d="M3 2.500h10.500q2 0 2 2v7q0 2-2 2h-10.500z" fill="#e1e5ea" stroke="#8d98a5" stroke-width=".800"/><ellipse cx="3" cy="8" rx="2.200" ry="5.500" fill="#eef0f3" stroke="#8d98a5" stroke-width=".800"/><path d="M1 8h14.500" stroke="#2e6fb0" stroke-width="1"/><g fill="#2e6fb0"><circle cx="1.200" cy="8" r="1.100"/><circle cx="15.300" cy="8" r="1.100"/><circle cx="2.500" cy="2.500" r=".900"/><circle cx="14.500" cy="2.500" r=".900"/><circle cx="2.500" cy="13.500" r=".900"/><circle cx="14.500" cy="13.500" r=".900"/></g></svg>
<div class="t" style="top:577.5px;left:110.4px;letter-spacing:-0.23px;">Pressure Point Constraint 1</div>
<svg style="position:absolute;left:53.9px;top:598.5px;" width="8" height="10" viewBox="0 0 8 10"><path d="M1.500 1l4 4-4 4" fill="none" stroke="#555" stroke-width="1.100"/></svg>
<svg style="position:absolute;left:68px;top:595.5px;" width="16" height="16" viewBox="0 0 16 16"><g fill="none" stroke-width="1.100"><path d="M2.500 .500c3 4-2.500 9-.500 15" stroke="#3aa04a"/><path d="M5.500 .500c3 4-2.500 9-.200 15" stroke="#3aa04a"/><path d="M8.700 .500c3 4-2.500 9 0 14.500" stroke="#4a9a8a"/><path d="M12 .500c2.500 3.500-2.500 8 .500 13" stroke="#5a8fc4"/><path d="M15 .500c-2.500 3-2.500 5-1 8" stroke="#5a8fc4"/></g></svg>
<div class="t" style="top:595.5px;left:90.4px;letter-spacing:-0.51px;">Level Set</div>
<div class="t" style="top:595.5px;left:139px;font-style:italic;letter-spacing:-0.36px;">(ls)</div>
<svg style="position:absolute;left:52.4px;top:617.5px;" width="10" height="8" viewBox="0 0 10 8"><path d="M1 2l4 4 4-4" fill="none" stroke="#222" stroke-width="1.200"/></svg>
<svg style="position:absolute;left:68px;top:613.5px;" width="16" height="16" viewBox="0 0 16 16"><g fill="none" stroke="#8a8a8a" stroke-width=".700"><ellipse cx="8.500" cy="4.500" rx="4.500" ry="2" transform="rotate(30 8.500 4.500)"/><ellipse cx="8.500" cy="4.500" rx="4.500" ry="2" transform="rotate(-30 8.500 4.500)"/><ellipse cx="8.500" cy="4.500" rx="2" ry="4.500"/></g><path d="M8.500 8v3M2.500 13v-2h12v2M8.500 11v2" fill="none" stroke="#555" stroke-width=".900"/><rect x="1" y="12.500" width="3" height="3" fill="#2e82cc"/><rect x="5.500" y="12.500" width="3" height="3" fill="#e0452c"/><rect x="9" y="12.500" width="3" height="3" fill="#3a9a4a"/><rect x="13" y="12.500" width="3" height="3" fill="#c020a0"/></svg>
<div class="t" style="top:613.5px;left:90.4px;letter-spacing:0.07px;">Multiphysics</div>
<svg style="position:absolute;left:88px;top:631.5px;" width="16" height="16" viewBox="0 0 16 16"><g fill="none" stroke="#5a87b5" stroke-width="1"><path d="M.500 2c4 0 7 1 9 4M.500 4.500c3.500 0 5.500 1 7 3.500M.500 7c2.500 0 4 1 5 3"/></g><path d="M12 6c2 3 3 4.500 3 6.500a3 3 0 0 1-6 0c0-2 1-3.500 3-6.500z" fill="#fff" stroke="#2e6fb0" stroke-width="1"/><path d="M12 10v3.500" stroke="#2e6fb0" stroke-width="1.200"/></svg>
<div class="t" style="top:631.5px;left:110.4px;letter-spacing:-0.36px;">Two-Phase Flow, Level Set 1</div>
<div class="t" style="top:631.5px;left:259px;font-style:italic;letter-spacing:0.05px;">(tpf1)</div>
<svg style="position:absolute;left:88px;top:649.5px;" width="16" height="16" viewBox="0 0 16 16"><path d="M4 3h10.500a1.500 1.500 0 0 1 1.500 1.500v8a1.500 1.500 0 0 1-1.500 1.500h-10.500z" fill="#e4e8ee" stroke="#9aa4b0" stroke-width=".800"/><path d="M5.500 8h10.500v4.500a1.500 1.500 0 0 1-1.500 1.500h-9z" fill="#2e82cc"/><ellipse cx="4" cy="8.500" rx="2.300" ry="5.500" fill="#eef1f5" stroke="#9aa4b0" stroke-width=".800"/></svg>
<div class="t" style="top:649.5px;left:110.4px;letter-spacing:0.12px;">Wetted Wall, Automatic from frame</div>
<div class="t" style="top:649.5px;left:302.4px;font-style:italic;letter-spacing:-0.16px;">(ww1)</div>
<svg style="position:absolute;left:88px;top:667.5px;" width="16" height="16" viewBox="0 0 16 16"><path d="M4 3h10.500a1.500 1.500 0 0 1 1.500 1.500v8a1.500 1.500 0 0 1-1.500 1.500h-10.500z" fill="#e4e8ee" stroke="#9aa4b0" stroke-width=".800"/><path d="M5.500 8h10.500v4.500a1.500 1.500 0 0 1-1.500 1.500h-9z" fill="#2e82cc"/><ellipse cx="4" cy="8.500" rx="2.300" ry="5.500" fill="#eef1f5" stroke="#9aa4b0" stroke-width=".800"/></svg>
<div class="t" style="top:667.5px;left:110.4px;letter-spacing:-0.14px;">Wetted Wall, Fixed wall</div>
<div class="t" style="top:667.5px;left:235.3px;font-style:italic;letter-spacing:-0.16px;">(ww2)</div>
<svg style="position:absolute;left:53.9px;top:688.5px;" width="8" height="10" viewBox="0 0 8 10"><path d="M1.500 1l4 4-4 4" fill="none" stroke="#555" stroke-width="1.100"/></svg>
<svg style="position:absolute;left:68px;top:685.5px;" width="16" height="16" viewBox="0 0 16 16"><path d="M8 1.500l7 12.500h-14z" fill="#d4d4d4" stroke="#808080" stroke-width="1"/><path d="M5.700 5.700h4.600M3.300 10h9.400M5.700 5.700l4.600 8.300M3.300 10l2.400 4M10.300 5.700l-4.600 8.300M12.700 10l-2.400 4" fill="none" stroke="#808080" stroke-width=".700"/></svg>
<div class="t" style="top:685.5px;left:90.4px;letter-spacing:-0.51px;">Mesh 1</div>
<svg style="position:absolute;left:33.9px;top:706.5px;" width="8" height="10" viewBox="0 0 8 10"><path d="M1.500 1l4 4-4 4" fill="none" stroke="#555" stroke-width="1.100"/></svg>
<svg style="position:absolute;left:48px;top:703.5px;" width="16" height="16" viewBox="0 0 16 16"><g fill="none" stroke="#1b9bb0" stroke-width="1"><path d="M.300 7c1.500-2.500 3-2 4 0s2 2.500 3 2.800"/><circle cx="9" cy="9" r="2.400"/><circle cx="13.500" cy="8.800" r="2.200"/></g></svg>
<div class="t" style="top:703.5px;left:70.4px;letter-spacing:-0.44px;">Study 1</div>
<svg style="position:absolute;left:32.4px;top:725.5px;" width="10" height="8" viewBox="0 0 10 8"><path d="M1 2l4 4 4-4" fill="none" stroke="#222" stroke-width="1.200"/></svg>
<svg style="position:absolute;left:48px;top:721.5px;" width="16" height="16" viewBox="0 0 16 16"><g stroke="#777" stroke-width=".900"><rect x="2.500" y=".500" width="9" height="8" fill="#fff"/><rect x="4" y="2.500" width="9" height="8" fill="#fff"/><rect x="5.500" y="4.500" width="9.500" height="9" fill="#fff"/></g><rect x="7" y="6" width="6.500" height="6" fill="#b956a8"/><path d="M.500 11l3-2v5h12v1.500h-13z" fill="#6e6e6e"/></svg>
<div class="t" style="top:721.5px;left:70.4px;letter-spacing:-0.54px;">Results</div>
<svg style="position:absolute;left:53.9px;top:742.5px;" width="8" height="10" viewBox="0 0 8 10"><path d="M1.500 1l4 4-4 4" fill="none" stroke="#555" stroke-width="1.100"/></svg>
<svg style="position:absolute;left:68px;top:739.5px;" width="16" height="16" viewBox="0 0 16 16"><g stroke="#b956a8" stroke-width="1" stroke-dasharray="1 1.300"><path d="M2.500 1.500v13M5.200 1.500v13M7.900 1.500v13M10.600 1.500v13M13.300 1.500v13"/></g></svg>
<div class="t" style="top:739.5px;left:90.4px;letter-spacing:-0.54px;">Datasets</div>
<svg style="position:absolute;left:68px;top:757.5px;" width="16" height="16" viewBox="0 0 16 16"><text x="0" y="7" font-size="7.300" font-weight="700" font-family="Liberation Sans,sans-serif" fill="#b956a8" textLength="16" lengthAdjust="spacingAndGlyphs">8.85</text><text x="0" y="14" font-size="7.300" font-weight="700" font-family="Liberation Sans,sans-serif" fill="#b956a8" textLength="16" lengthAdjust="spacingAndGlyphs">e-12</text></svg>
<div class="t" style="top:757.5px;left:90.4px;letter-spacing:-0.38px;">Derived Values</div>
<svg style="position:absolute;left:68px;top:775.5px;" width="16" height="16" viewBox="0 0 16 16"><rect x="1.600" y="1.600" width="12.800" height="12.800" fill="#f6e6f3" stroke="#b956a8" stroke-width="1.200"/><path d="M5.800 1.600v12.800M10.200 1.600v12.800M1.600 5.800h12.800M1.600 10.200h12.800" stroke="#b956a8" stroke-width="1.100"/><rect x="1.600" y="1.600" width="12.800" height="3" fill="#b956a8"/></svg>
<div class="t" style="top:775.5px;left:90.4px;letter-spacing:-0.61px;">Tables</div>
<svg style="position:absolute;left:53.9px;top:796.5px;" width="8" height="10" viewBox="0 0 8 10"><path d="M1.500 1l4 4-4 4" fill="none" stroke="#555" stroke-width="1.100"/></svg>
<svg style="position:absolute;left:68px;top:793.5px;" width="16" height="16" viewBox="0 0 16 16"><path d="M1.500 3.200l2.500-2.200h11v3z" fill="#b14fa3"/><path d="M1.500 3.200l3 1.300v10.500l-3-2z" fill="#a6469a"/><rect x="4.500" y="4.500" width="10.500" height="10.500" fill="#b956a8"/><path d="M1.700 3.300l2.800 1.200h10.500M4.500 4.500v10.500" fill="none" stroke="#f3dff0" stroke-width=".800"/></svg>
<div class="t" style="top:793.5px;left:90.4px;letter-spacing:-0.11px;">Velocity (spf)</div>
<svg style="position:absolute;left:53.9px;top:814.5px;" width="8" height="10" viewBox="0 0 8 10"><path d="M1.500 1l4 4-4 4" fill="none" stroke="#555" stroke-width="1.100"/></svg>
<svg style="position:absolute;left:68px;top:811.5px;" width="16" height="16" viewBox="0 0 16 16"><path d="M1.500 3.200l2.500-2.200h11v3z" fill="#b14fa3"/><path d="M1.500 3.200l3 1.300v10.500l-3-2z" fill="#a6469a"/><rect x="4.500" y="4.500" width="10.500" height="10.500" fill="#b956a8"/><path d="M1.700 3.300l2.800 1.200h10.500M4.500 4.500v10.500" fill="none" stroke="#f3dff0" stroke-width=".800"/></svg>
<div class="t" style="top:811.5px;left:90.4px;letter-spacing:-0.11px;">Volume Fraction of Fluid 1 (ls)</div>
<svg style="position:absolute;left:53.9px;top:832.5px;" width="8" height="10" viewBox="0 0 8 10"><path d="M1.500 1l4 4-4 4" fill="none" stroke="#555" stroke-width="1.100"/></svg>
<svg style="position:absolute;left:68px;top:829.5px;" width="16" height="16" viewBox="0 0 16 16"><path d="M1.500 3.200l2.500-2.200h11v3z" fill="#b14fa3"/><path d="M1.500 3.200l3 1.300v10.500l-3-2z" fill="#a6469a"/><rect x="4.500" y="4.500" width="10.500" height="10.500" fill="#b956a8"/><path d="M1.700 3.300l2.800 1.200h10.500M4.500 4.500v10.500" fill="none" stroke="#f3dff0" stroke-width=".800"/></svg>
<div class="t" style="top:829.5px;left:90.4px;letter-spacing:-0.39px;">Water Free Surface</div>
<svg style="position:absolute;left:53.9px;top:850.5px;" width="8" height="10" viewBox="0 0 8 10"><path d="M1.500 1l4 4-4 4" fill="none" stroke="#555" stroke-width="1.100"/></svg>
<svg style="position:absolute;left:68px;top:847.5px;" width="16" height="16" viewBox="0 0 16 16"><path d="M1 4.500l3-3.500h11v8.500l-3 4.500h-11z" fill="#f4e6f2" stroke="#a04a98" stroke-width="1"/><path d="M1 4.500h11v9.500M12 4.500l3-3.500" fill="none" stroke="#a04a98" stroke-width="1"/><rect x="3" y="7" width="7" height="4.500" fill="#e8c8e2" stroke="#a04a98" stroke-width=".900"/><path d="M3 7l3.500 2.300 3.500-2.300" fill="none" stroke="#a04a98" stroke-width=".800"/><path d="M5 1.500l-2 2.300h7l2-2.300z" fill="#d9a8d2"/></svg>
<div class="t" style="top:847.5px;left:90.4px;letter-spacing:-0.28px;">Export</div>
<svg style="position:absolute;left:68px;top:865.5px;" width="16" height="16" viewBox="0 0 16 16"><path d="M2.500 1.500h11v13h-11z" fill="#fff" stroke="#a04a98" stroke-width="1.200"/><path d="M4.500 4.500h5M4.500 7h3" stroke="#a04a98" stroke-width="1"/><path d="M13.500 4l-6 7.500-1 3 2.800-1.500 6-7.500z" fill="#a04a98"/></svg>
<div class="t" style="top:865.5px;left:90.4px;letter-spacing:-0.39px;">Reports</div>
<div class="p" style="position:absolute;left:358px;top:167.7px;width:319px;height:875.3px;"></div>
<div class="t" style="top:175.5px;left:365px;font-size:20px;line-height:26px;color:#4692d6;letter-spacing:0.14px;">Settings</div>
<svg style="position:absolute;left:635.5px;top:184px;" width="9" height="6" viewBox="0 0 9 6"><path d="M0 .500h9l-4.500 5z" fill="#a9acb2"/></svg><svg style="position:absolute;left:649.5px;top:182px;" width="9" height="9" viewBox="0 0 9 9"><rect x=".500" y=".500" width="8" height="7" fill="none" stroke="#a9acb2" stroke-width="1"/><path d="M.500 1h8" stroke="#a9acb2" stroke-width="1.500"/></svg><svg style="position:absolute;left:665.5px;top:181.5px;" width="8" height="11" viewBox="0 0 8 11"><path d="M2 0h4v4.500l1.500 1.500h-7l1.500-1.500zM3.600 6h.800v4.500h-.800z" fill="#a9acb2"/></svg>
<div class="t" style="top:202.5px;left:364px;font-size:13px;line-height:18px;color:#3585cc;letter-spacing:0.04px;">Rotating Domain</div>
<div class="t" style="top:237px;left:363.3px;letter-spacing:-0.45px;">Label:</div>
<div class="in" style="position:absolute;left:404px;top:236px;width:240px;height:18px;"></div>
<div class="t" style="top:237px;left:407px;letter-spacing:-0.08px;">Rotating Domain 1</div>
<div style="position:absolute;left:652px;top:234.5px;width:20px;height:21px;background:#ececec;border:1px solid #c6c6c6;border-radius:2px;box-sizing:border-box"></div>
<svg style="position:absolute;left:655px;top:238px;" width="14" height="14" viewBox="0 0 14 14"><rect x="1.600" y="1.600" width="11.400" height="10" fill="#fff" stroke="#6a6a6a" stroke-width="1.100"/><path d="M1.600 4h11.400" stroke="#6a6a6a" stroke-width="1.200"/><path d="M5 7h6M5 9.500h6" stroke="#1ea583" stroke-width="1.100"/><path d="M0 14l4-1-3-3z" fill="#1ea583"/></svg>
<div class="hl" style="position:absolute;left:358px;top:265px;width:319px;height:1px;"></div>
<div class="t" style="top:271.5px;left:364.2px;font-size:13px;line-height:18px;color:#2d5b9e;letter-spacing:0.16px;">Domain Selection</div>
<div class="t" style="top:303.5px;left:363.3px;letter-spacing:-0.27px;">Selection:</div>
<div class="cb" style="position:absolute;left:424px;top:301.5px;width:248px;height:20px;"></div>
<svg style="position:absolute;left:437px;top:304.5px;" width="16" height="13" viewBox="0 0 16 13"><path d="M3.500 .500h10.500a1.500 1.500 0 0 1 1.500 1.500v9a1.500 1.500 0 0 1-1.500 1.500h-10.500z" fill="#2e82cc"/><ellipse cx="3.200" cy="6.500" rx="2.400" ry="6" fill="#dbe7f3" stroke="#5f8fc0" stroke-width=".800"/></svg>
<div class="t" style="top:303.5px;left:456.7px;letter-spacing:-0.06px;">Manual</div>
<svg style="position:absolute;left:657.2px;top:309px;" width="8" height="5" viewBox="0 0 8 5"><path d="M.500 .500h7l-3.500 4z" fill="#222"/></svg>
<div style="position:absolute;left:362px;top:328.5px;width:39.5px;height:39px;background:#cce4f7;border:1px solid #9ccbef;box-sizing:border-box;border-radius:1px"></div>
<svg style="position:absolute;left:367px;top:341px;" width="30" height="14" viewBox="0 0 30 14"><rect x=".600" y=".600" width="28.800" height="12.800" rx="2" fill="#f2f2f2" stroke="#5a5a5a" stroke-width="1.200"/><rect x="3" y="3.500" width="15" height="7" rx="1" fill="#3fa34a"/><rect x="18" y="2" width="9.500" height="10" rx="1" fill="#b8b8b8" stroke="#6a6a6a" stroke-width=".900"/></svg>
<div class="in" style="position:absolute;left:409px;top:328.5px;width:197px;height:119.5px;border-bottom:2px solid #c4c4c4"></div>
<div class="t" style="top:332px;left:416.5px;font-size:11.5px;">3</div>
<svg style="position:absolute;left:621px;top:330px;" width="16" height="16" viewBox="0 0 16 16"><g fill="#9a9a9a" stroke="#6f6f6f" stroke-width=".600"><rect x="1" y="1" width="4" height="4"/><rect x="5" y="5" width="4" height="4"/></g><path d="M5 5l5 5" stroke="#6f6f6f" stroke-width=".800"/><rect x="9.500" y="9" width="5" height="5" fill="#2e82cc"/><path d="M9.500 9l1.500-1.500h5l-1.500 1.500z" fill="#1d5fa5"/></svg>
<svg style="position:absolute;left:621px;top:350px;" width="17" height="17" viewBox="0 0 17 17"><rect x="1" y="1" width="9" height="10" fill="#fff" stroke="#a0a0a0" stroke-width="1"/><rect x="5.500" y="4.500" width="9.500" height="11" fill="#fff" stroke="#2e82cc" stroke-width="1.100"/><path d="M7.500 8h5.500M7.500 10.500h5.500M7.500 13h5.500" stroke="#2e82cc" stroke-width="1"/></svg>
<svg style="position:absolute;left:621px;top:370px;" width="17" height="17" viewBox="0 0 17 17"><rect x="1.500" y="3" width="10" height="12" rx="1" fill="#e8e8e8" stroke="#7a7a7a" stroke-width="1.100"/><rect x="4" y="1" width="5" height="3.500" rx="1" fill="#7a7a7a"/><rect x="8" y="8" width="7.500" height="8" fill="#fff" stroke="#2e82cc" stroke-width="1.100"/></svg>
<svg style="position:absolute;left:620px;top:389px;" width="18" height="18" viewBox="0 0 18 18"><rect x="5" y="5" width="8" height="8" fill="#fff" stroke="#6a6a6a" stroke-width="1"/><path d="M9 7v4M7 9h4" stroke="#6a6a6a" stroke-width="1"/><path d="M9 .500l2 2.500h-4zM9 17.500l2-2.500h-4zM.500 9l2.500-2v4zM17.500 9l-2.500-2v4z" fill="#2e82cc"/></svg>
<svg style="position:absolute;left:654px;top:331px;" width="15" height="15" viewBox="0 0 15 15"><path d="M7.500 1v13M1 7.500h13" stroke="#9a9a9a" stroke-width="1.100"/></svg>
<svg style="position:absolute;left:654px;top:351px;" width="15" height="15" viewBox="0 0 15 15"><path d="M1 7.500h13" stroke="#2e82cc" stroke-width="1.300"/></svg>
<svg style="position:absolute;left:653px;top:370px;" width="17" height="17" viewBox="0 0 17 17"><rect x="3" y="3" width="12.500" height="11.500" fill="#e4effa" stroke="#2e82cc" stroke-width="1" stroke-dasharray="2 1.300"/><path d="M7 4h7.500v8z" fill="#2a6fb8"/><path d="M1.500 .500l4.500 8.500" stroke="#5a4a3a" stroke-width="1.400"/><path d="M4.200 9l4-2.200 3.300 8.200-5 1.500z" fill="#f2ae52"/><path d="M6.500 14.500l-.800-4M8.500 14l-1.200-4" stroke="#d98e30" stroke-width=".600"/></svg>
<svg style="position:absolute;left:654px;top:391px;" width="15" height="14" viewBox="0 0 15 14"><path d="M1 1.500h13" stroke="#2e82cc" stroke-width="1.600"/><path d="M1.500 8.500c3-4.500 9-4.500 12 0-3 4.500-9 4.500-12 0z" fill="#2e82cc"/><circle cx="7.500" cy="8.500" r="2.100" fill="#fff"/><circle cx="7.500" cy="8.500" r="1.100" fill="#2e82cc"/></svg>
<div class="hl" style="position:absolute;left:358px;top:457px;width:319px;height:1px;"></div>
<svg style="position:absolute;left:365.5px;top:466.5px;" width="6" height="9" viewBox="0 0 6 9"><path d="M1 1l3.500 3.500-3.500 3.500" fill="none" stroke="#222" stroke-width="1.200"/></svg>
<div class="t" style="top:462px;left:384.2px;font-size:13px;line-height:18px;color:#2d5b9e;letter-spacing:0.18px;">Override</div>
<div class="hl" style="position:absolute;left:358px;top:486px;width:319px;height:1px;"></div>
<svg style="position:absolute;left:364px;top:497.5px;" width="9" height="6" viewBox="0 0 9 6"><path d="M1 1l3.500 3.500 3.500-3.500" fill="none" stroke="#2d5b9e" stroke-width="1.200"/></svg>
<div class="t" style="top:491.3px;left:384.4px;font-size:13px;line-height:18px;color:#2d5b9e;letter-spacing:0.33px;">Rotation</div>
<div class="t" style="top:521.5px;left:363px;letter-spacing:-0.03px;">Rotation type:</div>
<div class="cb" style="position:absolute;left:363px;top:543.5px;width:308.5px;height:20px;"></div>
<div class="t" style="top:545.5px;left:376px;letter-spacing:0.02px;">Specified rotational velocity</div>
<svg style="position:absolute;left:657px;top:551px;" width="8" height="5" viewBox="0 0 8 5"><path d="M.500 .500h7l-3.500 4z" fill="#222"/></svg>
<div class="t" style="top:570.3px;left:363px;letter-spacing:-0.08px;">Rotational velocity expression:</div>
<div class="cb" style="position:absolute;left:363px;top:591.5px;width:308.5px;height:20px;"></div>
<div class="t" style="top:593.5px;left:376px;letter-spacing:-0.05px;">General revolutions per time</div>
<svg style="position:absolute;left:657px;top:599px;" width="8" height="5" viewBox="0 0 8 5"><path d="M.500 .500h7l-3.500 4z" fill="#222"/></svg>
<div class="t" style="top:618px;left:363px;letter-spacing:-0.05px;">Revolutions per time:</div>
<div class="t" style="top:640px;left:365px;font-size:12.5px;font-style:italic;">f</div>
<div class="in" style="position:absolute;left:392px;top:639.5px;width:253px;height:17.5px;"></div>
<div class="t" style="top:640.2px;left:395px;letter-spacing:0.06px;">275[rpm]*step1(t[1/s])</div>
<div class="t" style="top:640.5px;left:655.6px;letter-spacing:-0.34px;">1/s</div>
<div class="t" style="top:663px;left:363px;letter-spacing:-0.05px;">Initial angle:</div>
<div class="t" style="top:683px;left:364.5px;font-size:13.5px;font-style:italic;">α</div>
<div class="t" style="top:687px;left:373.5px;font-size:9px;">0</div>
<div class="in" style="position:absolute;left:392px;top:684.5px;width:253px;height:17.5px;"></div>
<div class="t" style="top:685px;left:395px;">0</div>
<div class="t" style="top:685px;left:655.6px;letter-spacing:-0.31px;">rad</div>
<div class="hl" style="position:absolute;left:358px;top:713px;width:319px;height:1px;"></div>
<svg style="position:absolute;left:364px;top:724.5px;" width="9" height="6" viewBox="0 0 9 6"><path d="M1 1l3.500 3.500 3.500-3.500" fill="none" stroke="#2d5b9e" stroke-width="1.200"/></svg>
<div class="t" style="top:718.2px;left:384.4px;font-size:13px;line-height:18px;color:#2d5b9e;letter-spacing:0.01px;">Axis</div>
<div class="t" style="top:749px;left:363px;letter-spacing:-0.12px;">Rotation axis base point:</div>
<div style="position:absolute;left:400px;top:770px;width:250.5px;height:64px;background:#fff;border:1px solid #bdbdbd;box-sizing:border-box;box-shadow:1px 1px 0 #d0d0d0"></div><div style="position:absolute;left:629px;top:771px;width:20.5px;height:62px;background:#f3f3f3;border-left:1px solid #bdbdbd;box-sizing:border-box"></div><div style="position:absolute;left:401px;top:791px;width:248.5px;height:1px;background:#bdbdbd"></div><div style="position:absolute;left:401px;top:812px;width:248.5px;height:1px;background:#bdbdbd"></div><div class="t" style="top:773px;left:404.5px;">0</div><div class="t" style="top:773px;left:632.5px;">X</div><div class="t" style="top:794px;left:404.5px;">0</div><div class="t" style="top:794px;left:632.5px;">Y</div><div class="t" style="top:815px;left:404.5px;">0</div><div class="t" style="top:815px;left:632.5px;">Z</div>
<div class="t" style="top:793.5px;left:365px;font-size:13px;font-weight:bold;">r</div>
<div class="t" style="top:798px;left:371px;font-size:9.5px;">ax</div>
<div class="t" style="top:794.5px;left:661px;">m</div>
<div class="t" style="top:841px;left:363px;letter-spacing:-0.16px;">Rotation axis:</div>
<div style="position:absolute;left:400px;top:862px;width:250.5px;height:64px;background:#fff;border:1px solid #bdbdbd;box-sizing:border-box;box-shadow:1px 1px 0 #d0d0d0"></div><div style="position:absolute;left:629px;top:863px;width:20.5px;height:62px;background:#f3f3f3;border-left:1px solid #bdbdbd;box-sizing:border-box"></div><div style="position:absolute;left:401px;top:883px;width:248.5px;height:1px;background:#bdbdbd"></div><div style="position:absolute;left:401px;top:904px;width:248.5px;height:1px;background:#bdbdbd"></div><div class="t" style="top:865px;left:404.5px;">0</div><div class="t" style="top:865px;left:632.5px;">X</div><div class="t" style="top:886px;left:404.5px;">1</div><div class="t" style="top:886px;left:632.5px;">Y</div><div class="t" style="top:907px;left:404.5px;">0</div><div class="t" style="top:907px;left:632.5px;">Z</div>
<div class="t" style="top:885.5px;left:365.5px;font-size:13px;font-weight:bold;">u</div>
<div class="t" style="top:890px;left:374px;font-size:9.5px;">rot</div>
<div class="t" style="top:886.5px;left:661.5px;">1</div>
<div class="p" style="position:absolute;left:684px;top:167.7px;width:1226px;height:791.8px;overflow:hidden"></div>
<svg style="position:absolute;left:684px;top:199px;" width="1226" height="760.5" viewBox="684 199 1226 760.5"><defs>
<linearGradient id="bg" x1="0" y1="0" x2="0" y2="1"><stop offset="0" stop-color="#fafbfe"/><stop offset=".5" stop-color="#eff5fd"/><stop offset="1" stop-color="#e5f0fd"/></linearGradient>
<linearGradient id="wall" gradientUnits="userSpaceOnUse" x1="1072" y1="0" x2="1478" y2="0"><stop offset="0" stop-color="#5c5f5f"/><stop offset=".08" stop-color="#646767"/><stop offset=".25" stop-color="#6c6f6f"/><stop offset=".36" stop-color="#787b7b"/><stop offset=".44" stop-color="#8a8d8d"/><stop offset=".495" stop-color="#b0b3b3"/><stop offset=".525" stop-color="#f6f8f8"/><stop offset=".57" stop-color="#fdfdfd"/><stop offset=".6" stop-color="#c0c3c3"/><stop offset=".65" stop-color="#707272"/><stop offset=".745" stop-color="#727575"/><stop offset=".856" stop-color="#6c6f6f"/><stop offset=".94" stop-color="#606363"/><stop offset=".958" stop-color="#5e6161"/><stop offset="1" stop-color="#767878"/></linearGradient>
<linearGradient id="rod" x1="0" y1="0" x2="1" y2="0"><stop offset="0" stop-color="#727676"/><stop offset=".15" stop-color="#a9adad"/><stop offset=".235" stop-color="#ffffff"/><stop offset=".3" stop-color="#e4e7e7"/><stop offset=".38" stop-color="#bfc3c3"/><stop offset=".6" stop-color="#8a8d8d"/><stop offset="1" stop-color="#6a6d6d"/></linearGradient>
<linearGradient id="rodw" x1="0" y1="0" x2="1" y2="0"><stop offset="0" stop-color="#5390ab"/><stop offset=".22" stop-color="#9fd2e2"/><stop offset=".34" stop-color="#6aa6bd"/><stop offset=".6" stop-color="#4f8ba5"/><stop offset="1" stop-color="#477f99"/></linearGradient>
<linearGradient id="wbody" gradientUnits="userSpaceOnUse" x1="1022" y1="0" x2="1451" y2="0"><stop offset="0" stop-color="#43a4d6"/><stop offset=".04" stop-color="#58b8e2"/><stop offset=".1" stop-color="#64c0e6"/><stop offset=".155" stop-color="#54b0da"/><stop offset=".17" stop-color="#4d8eaa"/><stop offset=".3" stop-color="#5a98b2"/><stop offset=".45" stop-color="#63a0b8"/><stop offset=".6" stop-color="#7db4c6"/><stop offset=".7" stop-color="#8cc0d0"/><stop offset=".76" stop-color="#6ea9be"/><stop offset=".9" stop-color="#5f9eb6"/><stop offset="1" stop-color="#4f8ea8"/></linearGradient>
<linearGradient id="wshade" gradientUnits="userSpaceOnUse" x1="0" y1="430" x2="0" y2="940"><stop offset="0" stop-color="#2a6e8c" stop-opacity="0"/><stop offset=".55" stop-color="#2a6e8c" stop-opacity=".04"/><stop offset="1" stop-color="#1f5f7c" stop-opacity=".22"/></linearGradient>
<linearGradient id="wtop" gradientUnits="userSpaceOnUse" x1="1022" y1="0" x2="1451" y2="0"><stop offset="0" stop-color="#369fd6"/><stop offset=".1" stop-color="#2793cc"/><stop offset=".3" stop-color="#2390c9"/><stop offset=".55" stop-color="#1f8dc7"/><stop offset=".75" stop-color="#2595ce"/><stop offset="1" stop-color="#2e8dc0"/></linearGradient>
<linearGradient id="vort" gradientUnits="userSpaceOnUse" x1="1150" y1="0" x2="1335" y2="0"><stop offset="0" stop-color="#2597d2"/><stop offset=".3" stop-color="#22a2dc"/><stop offset=".55" stop-color="#2eb2ea"/><stop offset=".8" stop-color="#26a6e0"/><stop offset="1" stop-color="#3db4e6"/></linearGradient>
<radialGradient id="dish" gradientUnits="userSpaceOnUse" cx="1240" cy="850" r="190"><stop offset="0" stop-color="#558fa5"/><stop offset=".6" stop-color="#4c869c"/><stop offset="1" stop-color="#4a8399"/></radialGradient>
<filter id="mott" x="0" y="0" width="1" height="1"><feTurbulence type="fractalNoise" baseFrequency=".022 .014" numOctaves="2" seed="4"/><feColorMatrix type="matrix" values="0 0 0 0 .75  0 0 0 0 .92  0 0 0 0 1  2.6 0 0 0 -1.15"/></filter>
<filter id="mottd" x="0" y="0" width="1" height="1"><feTurbulence type="fractalNoise" baseFrequency=".03 .018" numOctaves="2" seed="11"/><feColorMatrix type="matrix" values="0 0 0 0 .1  0 0 0 0 .3  0 0 0 0 .42  0 2.6 0 0 -1.2"/></filter>
<filter id="spark" x="0" y="0" width="1" height="1"><feTurbulence type="turbulence" baseFrequency=".045 .075" numOctaves="2" seed="8"/><feColorMatrix type="matrix" values="0 0 0 0 .92  0 0 0 0 .98  0 0 0 0 1  -14 0 0 0 1.55"/></filter>
<filter id="sparkd" x="0" y="0" width="1" height="1"><feTurbulence type="turbulence" baseFrequency=".04 .07" numOctaves="2" seed="21"/><feColorMatrix type="matrix" values="0 0 0 0 .05  0 0 0 0 .3  0 0 0 0 .45  0 -12 0 0 1.4"/></filter>
<linearGradient id="rdark" gradientUnits="userSpaceOnUse" x1="1320" y1="0" x2="1400" y2="0"><stop offset="0" stop-color="#1f78aa" stop-opacity="0"/><stop offset="1" stop-color="#1f78aa" stop-opacity=".38"/></linearGradient>
<linearGradient id="lip" gradientUnits="userSpaceOnUse" x1="0" y1="480" x2="0" y2="535"><stop offset="0" stop-color="#6fd0f4" stop-opacity=".75"/><stop offset="1" stop-color="#6fd0f4" stop-opacity="0"/></linearGradient>
<clipPath id="cv"><rect x="684" y="199" width="1226" height="760.5"/></clipPath>
<clipPath id="cwb"><path d="M1022 430C1024.9 457.2 1035.6 556.8 1040 600C1044.4 643.2 1046.6 672.3 1049.6 700C1052.6 727.7 1056.8 753.6 1059 773C1061.2 792.4 1062.1 808.7 1063.5 821C1064.9 833.3 1065.4 841.5 1068 850C1070.6 858.5 1074.6 866.6 1080 874C1085.4 881.4 1093.0 889.8 1102 896C1111.0 902.2 1123.2 907.9 1136 913C1148.8 918.1 1165.4 924.6 1182 928C1198.6 931.4 1226.9 933.3 1240 934C1253.1 934.7 1252.3 933.8 1264 932.5C1275.7 931.2 1298.6 929.0 1313 926C1327.4 923.0 1343.9 918.0 1354 914C1364.1 910.0 1369.4 905.8 1376 901C1382.6 896.2 1390.0 891.0 1395 884C1400.0 877.0 1404.1 867.1 1407 857C1409.9 846.9 1411.2 834.4 1413 821C1414.8 807.6 1416.2 792.4 1418 773C1419.8 753.6 1421.4 724.5 1424 700C1426.6 675.5 1430.8 648.8 1434 620C1437.2 591.2 1441.3 552.6 1444 520C1446.7 487.4 1449.9 432.6 1451 416C1451.0 415.5 1454.8 416.0 1451 413C1447.2 410.0 1434.8 401.5 1427 397C1419.2 392.5 1410.0 388.0 1402 385C1394.0 382.0 1385.0 379.3 1377 378C1369.0 376.7 1357.9 376.7 1352 377C1346.1 377.3 1342.9 378.6 1340 380C1337.1 381.4 1340.1 385.8 1334 386C1327.9 386.2 1319.3 380.0 1302 381C1284.7 382.0 1248.2 389.5 1226 392.5C1203.8 395.5 1186.2 398.3 1163 400C1139.8 401.7 1099.1 401.6 1081 403C1062.9 404.4 1057.8 406.6 1050 409C1042.2 411.4 1036.5 414.6 1032 418C1027.5 421.4 1023.6 428.1 1022 430Z"/></clipPath><clipPath id="ctop"><path d="M1451 413C1447.2 410.4 1434.8 401.5 1427 397C1419.2 392.5 1410.0 388.0 1402 385C1394.0 382.0 1385.0 379.3 1377 378C1369.0 376.7 1357.9 376.7 1352 377C1346.1 377.3 1342.9 378.6 1340 380C1337.1 381.4 1340.1 385.8 1334 386C1327.9 386.2 1319.3 380.0 1302 381C1284.7 382.0 1248.2 389.5 1226 392.5C1203.8 395.5 1186.2 398.3 1163 400C1139.8 401.7 1099.1 401.6 1081 403C1062.9 404.4 1057.8 406.6 1050 409C1042.2 411.4 1036.5 414.6 1032 418C1027.5 421.4 1023.6 428.1 1022 430C1025.7 431.6 1036.5 437.1 1045 440C1053.5 442.9 1063.3 445.5 1075 448C1086.7 450.5 1106.8 452.8 1118 455.5C1129.2 458.2 1137.3 461.6 1145 465C1152.7 468.4 1157.0 472.8 1166 477C1175.0 481.2 1187.4 486.8 1201 491C1214.6 495.2 1234.8 500.4 1251 503C1267.2 505.6 1288.7 507.0 1302 507C1315.3 507.0 1326.0 505.6 1334 503C1342.0 500.4 1342.7 494.5 1352 491C1361.3 487.5 1380.3 484.0 1392 481C1403.7 478.0 1416.2 475.7 1425 472C1433.8 468.3 1443.5 460.2 1447 458L1451 413Z"/></clipPath><clipPath id="ctopr"><path d="M1330 370L1460 370L1460 480L1392 484L1352 494L1330 470Z"/></clipPath></defs><g clip-path="url(#cv)"><rect x="684" y="199" width="1226" height="760.5" fill="url(#bg)"/><g stroke="#7e7e7e" stroke-width="1" fill="none"><path d="M908 287L994 869"/><path d="M987 279L1051 823"/><path d="M1058 270L1075 420"/><path d="M902 397.6L1078 354"/><path d="M932 585L1091 521.6"/><path d="M957 744L1071 669"/><path d="M1524 270L1460 805"/><path d="M1480 360.7L1534 368.7"/><path d="M1453 529.6L1514 539.7"/><path d="M1438.7 669L1493.7 684"/><path d="M1008 890L1138 960"/><path d="M1009 910L1068.6 849.6"/><path d="M1070 943L1112 902.7"/><path d="M1152.7 960L1180 932"/><path d="M1255 960L1275 937"/><path d="M1361 960L1452.8 827.7"/><path d="M1425 829.5L1462 842"/><path d="M1405 875L1434.5 888"/><path d="M1354 913.7L1401.5 939"/><path d="M1262.5 939L1299 960"/><path d="M1114 269L1114 263.5"/><path d="M1165 266.5L1165 261"/><path d="M1218 265L1218 259.5"/><path d="M1284 263L1284 258"/><path d="M1357 267L1357 262"/><path d="M1436 275L1437 270"/></g><path d="M1072 273C1080.6 272.2 1109.0 269.2 1126 268C1143.0 266.8 1163.9 266.1 1178 265.5C1192.1 264.9 1197.0 264.7 1214 264.5C1231.0 264.3 1261.1 263.9 1284 264.5C1306.9 265.1 1332.7 266.0 1357 268C1381.3 270.0 1416.8 274.1 1436 277C1455.2 279.9 1470.4 284.6 1477 286C1473.8 323.4 1463.2 451.2 1457 520C1450.8 588.8 1442.3 675.5 1438 716C1433.7 756.5 1432.1 756.2 1430 773C1427.9 789.8 1427.1 807.9 1425 821C1422.9 834.1 1420.2 846.5 1417 855C1413.8 863.5 1410.1 867.8 1405 874C1399.9 880.2 1392.2 887.9 1385 894C1377.8 900.1 1370.4 906.2 1360 912C1349.6 917.8 1334.4 925.7 1320 930C1305.6 934.3 1282.8 937.3 1270 939C1257.2 940.7 1254.1 941.2 1240 940.5C1225.9 939.8 1198.6 937.9 1182 934.5C1165.4 931.1 1149.0 924.9 1136 919.5C1123.0 914.1 1110.0 907.6 1101 901C1092.0 894.4 1085.3 886.0 1080 878C1074.7 870.0 1069.9 855.3 1068 851L1107 835L1107 610L1087 458L1081 403Z" fill="url(#wall)"/><path d="M1101 898C1106.6 901.0 1123.0 911.1 1136 916.5C1149.0 921.9 1165.4 928.1 1182 931.5C1198.6 934.9 1225.9 936.8 1240 937.5C1254.1 938.2 1257.2 937.5 1270 936C1282.8 934.5 1305.6 932.1 1320 928C1334.4 923.9 1349.6 916.3 1360 910.5C1370.4 904.7 1381.0 895.0 1385 892" fill="none" stroke="#b2b5b5" stroke-width="6" stroke-linecap="round"/><path d="M1462.600 295L1477.700 287.700L1457 520L1438 716L1430 773L1425 821L1417 855L1405 857L1413 821L1418 773L1424 700L1434 620L1444 520L1451 416Z" fill="#767878"/><path d="M1305.700 272C1305.700 268.500 1337 268.500 1337 272L1333 415L1304 415Z" fill="url(#rod)"/><ellipse cx="1321.300" cy="271" rx="15.600" ry="2.400" fill="#9da1a1"/><path d="M1022 430C1024.9 457.2 1035.6 556.8 1040 600C1044.4 643.2 1046.6 672.3 1049.6 700C1052.6 727.7 1056.8 753.6 1059 773C1061.2 792.4 1062.1 808.7 1063.5 821C1064.9 833.3 1065.4 841.5 1068 850C1070.6 858.5 1074.6 866.6 1080 874C1085.4 881.4 1093.0 889.8 1102 896C1111.0 902.2 1123.2 907.9 1136 913C1148.8 918.1 1165.4 924.6 1182 928C1198.6 931.4 1226.9 933.3 1240 934C1253.1 934.7 1252.3 933.8 1264 932.5C1275.7 931.2 1298.6 929.0 1313 926C1327.4 923.0 1343.9 918.0 1354 914C1364.1 910.0 1369.4 905.8 1376 901C1382.6 896.2 1390.0 891.0 1395 884C1400.0 877.0 1404.1 867.1 1407 857C1409.9 846.9 1411.2 834.4 1413 821C1414.8 807.6 1416.2 792.4 1418 773C1419.8 753.6 1421.4 724.5 1424 700C1426.6 675.5 1430.8 648.8 1434 620C1437.2 591.2 1441.3 552.6 1444 520C1446.7 487.4 1449.9 432.6 1451 416C1451.0 415.5 1454.8 416.0 1451 413C1447.2 410.0 1434.8 401.5 1427 397C1419.2 392.5 1410.0 388.0 1402 385C1394.0 382.0 1385.0 379.3 1377 378C1369.0 376.7 1357.9 376.7 1352 377C1346.1 377.3 1342.9 378.6 1340 380C1337.1 381.4 1340.1 385.8 1334 386C1327.9 386.2 1319.3 380.0 1302 381C1284.7 382.0 1248.2 389.5 1226 392.5C1203.8 395.5 1186.2 398.3 1163 400C1139.8 401.7 1099.1 401.6 1081 403C1062.9 404.4 1057.8 406.6 1050 409C1042.2 411.4 1036.5 414.6 1032 418C1027.5 421.4 1023.6 428.1 1022 430Z" fill="url(#wbody)"/><path d="M1022 430C1024.9 457.2 1035.6 556.8 1040 600C1044.4 643.2 1046.6 672.3 1049.6 700C1052.6 727.7 1056.8 753.6 1059 773C1061.2 792.4 1062.1 808.7 1063.5 821C1064.9 833.3 1065.4 841.5 1068 850C1070.6 858.5 1074.6 866.6 1080 874C1085.4 881.4 1093.0 889.8 1102 896C1111.0 902.2 1123.2 907.9 1136 913C1148.8 918.1 1165.4 924.6 1182 928C1198.6 931.4 1226.9 933.3 1240 934C1253.1 934.7 1252.3 933.8 1264 932.5C1275.7 931.2 1298.6 929.0 1313 926C1327.4 923.0 1343.9 918.0 1354 914C1364.1 910.0 1369.4 905.8 1376 901C1382.6 896.2 1390.0 891.0 1395 884C1400.0 877.0 1404.1 867.1 1407 857C1409.9 846.9 1411.2 834.4 1413 821C1414.8 807.6 1416.2 792.4 1418 773C1419.8 753.6 1421.4 724.5 1424 700C1426.6 675.5 1430.8 648.8 1434 620C1437.2 591.2 1441.3 552.6 1444 520C1446.7 487.4 1449.9 432.6 1451 416C1451.0 415.5 1454.8 416.0 1451 413C1447.2 410.0 1434.8 401.5 1427 397C1419.2 392.5 1410.0 388.0 1402 385C1394.0 382.0 1385.0 379.3 1377 378C1369.0 376.7 1357.9 376.7 1352 377C1346.1 377.3 1342.9 378.6 1340 380C1337.1 381.4 1340.1 385.8 1334 386C1327.9 386.2 1319.3 380.0 1302 381C1284.7 382.0 1248.2 389.5 1226 392.5C1203.8 395.5 1186.2 398.3 1163 400C1139.8 401.7 1099.1 401.6 1081 403C1062.9 404.4 1057.8 406.6 1050 409C1042.2 411.4 1036.5 414.6 1032 418C1027.5 421.4 1023.6 428.1 1022 430Z" fill="url(#wshade)"/><path d="M1081 450L1087 458L1107 610L1107 770L1100 800L1092 700L1086 600Z" fill="#3d84a6" opacity=".35"/><path d="M1086 456L1106 610L1106 745" fill="none" stroke="#9ad4ea" stroke-width="1" opacity=".6"/><path d="M1063.500 821C1064 790 1110 736 1240 728C1370 736 1412 790 1413 821L1407 857C1400 875 1385 893 1354 914L1313 926L1264 932.500L1240 934L1182 928L1136 913L1102 896L1080 874L1068 850Z" fill="url(#dish)" opacity=".8"/><path d="M1064 818C1066 788 1112 737 1240 729C1368 737 1410 788 1413 818" fill="none" stroke="#86bdd0" stroke-width="1.300" opacity=".55"/><ellipse cx="1240" cy="905" rx="120" ry="24" fill="#5d9ab0" opacity=".5"/><g clip-path="url(#cwb)"><rect x="1015" y="400" width="445" height="545" filter="url(#mott)" opacity=".26"/><rect x="1015" y="400" width="445" height="545" filter="url(#mottd)" opacity=".26"/></g><g fill="none" stroke="#2f6f8c" stroke-width="2.200" opacity=".3" stroke-linecap="round"><path d="M1418 560c4 8-3 14 1 24"/><path d="M1408 640c5 10-4 18 0 30"/><path d="M1396 700c4 8-2 14 2 22"/><path d="M1392 800c8-4 14 4 18-6"/><path d="M1380 840c6-8 14-2 22-14"/><path d="M1370 870c8-2 12-8 20-8"/><path d="M1425 500c3 8-4 12 0 22"/></g><g fill="#c8ecf8" opacity=".22"><ellipse cx="1050" cy="560" rx="7" ry="22" transform="rotate(8 1050 560)"/><ellipse cx="1062" cy="660" rx="6" ry="26" transform="rotate(8 1062 660)"/><ellipse cx="1070" cy="520" rx="5" ry="16"/><ellipse cx="1072" cy="760" rx="5" ry="18"/><ellipse cx="1045" cy="480" rx="6" ry="14"/></g><path d="M1123 453L1166 477L1173 714C1173 722 1178 726 1178 733L1178 752C1178 760 1136 760 1136 752L1136 733C1136 726 1132.500 722 1132.500 714Z" fill="url(#rodw)"/><path d="M1304 415L1333 415L1331 560C1331 566 1328.500 570 1328.500 596L1328 628C1328 634 1294 634 1294 628L1295 596C1296 580 1300 572 1300 560Z" fill="url(#rodw)" opacity=".92"/><path d="M1151 470C1153.7 476.7 1161.6 495.8 1168 512C1174.4 528.2 1184.8 556.9 1191 571C1197.2 585.1 1203.0 589.0 1207 600C1211.0 611.0 1213.2 632.0 1216 640C1218.8 648.0 1222.4 640.4 1224.6 650C1226.8 659.6 1228.7 684.5 1229.7 700C1230.7 715.5 1231.3 732.9 1231 747C1230.7 761.1 1228.5 781.4 1228 788C1229 806 1260 806 1261.500 788C1262.1 781.4 1265.3 761.1 1265 747C1264.7 732.9 1260.9 715.5 1259.8 700C1258.7 684.5 1257.7 659.6 1258 650C1258.3 640.4 1259.3 648.0 1261.5 640C1263.7 632.0 1266.4 613.4 1272 600C1277.6 586.6 1286.8 572.0 1296.7 556C1306.6 540.0 1328.0 509.0 1334 500L1302 507L1251 503L1201 491Z" fill="url(#vort)"/><path d="M1151 470L1166 477L1201 491L1251 503L1302 507L1334 503L1334 500L1318 528C1280 536 1220 530 1176 510Z" fill="url(#lip)"/><path d="M1236 660C1238 700 1240 740 1238 785" fill="none" stroke="#7fd8f6" stroke-width="3" opacity=".55"/><g><path d="M1150 545C1170 522 1260 512 1330 520C1380 528 1400 555 1388 585C1375 615 1330 640 1273 649" fill="none" stroke="#3fd8ec" stroke-width="1.8" stroke-linecap="round" opacity="1"/><path d="M1135 600C1150 580 1230 572 1290 580C1340 590 1350 612 1330 628" fill="none" stroke="#7fe4b0" stroke-width="1.2" stroke-linecap="round" opacity="0.85"/><path d="M1140 650C1170 628 1270 624 1330 640C1370 655 1372 690 1340 708" fill="none" stroke="#b0ec70" stroke-width="1.2" stroke-linecap="round" opacity="0.85"/><path d="M1375 687C1395 705 1408 740 1407 781" fill="none" stroke="#d8f040" stroke-width="1.2" stroke-linecap="round" opacity="0.9"/><path d="M1250 700C1300 690 1350 700 1385 730" fill="none" stroke="#9ee8a0" stroke-width="1" stroke-linecap="round" opacity="0.8"/><path d="M1150 720C1200 700 1300 700 1345 722" fill="none" stroke="#c8f048" stroke-width="1.2" stroke-linecap="round" opacity="0.8"/><path d="M1107 525C1106 540 1112 552 1124 558" fill="none" stroke="#35d0f0" stroke-width="2.6" stroke-linecap="round" opacity="1"/><path d="M1142 567C1190 570 1260 566 1310 557" fill="none" stroke="#38d4f0" stroke-width="3" stroke-linecap="round" opacity="1"/><path d="M1169 543C1200 549 1260 557 1307 558" fill="none" stroke="#35d0f0" stroke-width="2.4" stroke-linecap="round" opacity="1"/><path d="M1210 580C1230 610 1240 640 1262 668C1270 690 1262 705 1250 715" fill="none" stroke="#40d8ec" stroke-width="2" stroke-linecap="round" opacity="1"/><path d="M1236 745L1218 790" fill="none" stroke="#40e0f0" stroke-width="2.2" stroke-linecap="round" opacity="1"/><path d="M1172 572C1210 580 1250 590 1284 596C1310 600 1336 598 1335 592C1333 586 1300 586 1280 589" fill="none" stroke="#a0e890" stroke-width="2.8" stroke-linecap="round" opacity="1"/><path d="M1172 605L1317 628" fill="none" stroke="#b8ec60" stroke-width="3.8" stroke-linecap="round" opacity="1"/><path d="M1317 628L1298 634" fill="none" stroke="#b8ec60" stroke-width="2.5" stroke-linecap="round" opacity="1"/><path d="M1174 635L1298 644" fill="none" stroke="#d0f040" stroke-width="3.4" stroke-linecap="round" opacity="1"/><path d="M1298 644L1262 656" fill="none" stroke="#d0f040" stroke-width="2.4" stroke-linecap="round" opacity="1"/><path d="M1176 669C1220 680 1280 695 1321 704L1268 734" fill="none" stroke="#c8f048" stroke-width="3.8" stroke-linecap="round" opacity="1"/><path d="M1178 680L1308 737L1285 747" fill="none" stroke="#cdf046" stroke-width="3" stroke-linecap="round" opacity="1"/><path d="M1130 607C1124 620 1126 640 1135 649" fill="none" stroke="#bff050" stroke-width="2" stroke-linecap="round" opacity="1"/><path d="M1119 655C1114 690 1125 740 1154 784" fill="none" stroke="#c8f048" stroke-width="2.4" stroke-linecap="round" opacity="1"/><path d="M1126 702C1100 706 1090 716 1095 724C1100 735 1120 745 1140 752" fill="none" stroke="#c8f048" stroke-width="2.6" stroke-linecap="round" opacity="1"/><path d="M1080 761C1130 775 1200 780 1250 777C1300 773 1350 762 1357 745C1358 735 1340 725 1315 721" fill="none" stroke="#c8f048" stroke-width="3.8" stroke-linecap="round" opacity="1"/><path d="M1181 734C1195 760 1210 785 1221 798" fill="none" stroke="#cdf046" stroke-width="3" stroke-linecap="round" opacity="1"/><path d="M1150 690C1160 730 1185 770 1215 790" fill="none" stroke="#d2f044" stroke-width="2" stroke-linecap="round" opacity="1"/><path d="M1195 660C1180 700 1190 750 1230 790" fill="none" stroke="#c8f048" stroke-width="1.6" stroke-linecap="round" opacity="1"/><path d="M1250 690C1300 700 1330 720 1338 745" fill="none" stroke="#d0f040" stroke-width="2" stroke-linecap="round" opacity="1"/></g><path d="M1110 847L1135 817C1150 800 1172 775 1202 742" fill="none" stroke="#f09030" stroke-width="2.400"/><path d="M1137 815l11 -11" stroke="#a030c0" stroke-width="2.400"/><path d="M1163 787l12 -14" stroke="#e83060" stroke-width="2.400"/><path d="M1189 800C1215 830 1260 860 1325 868" fill="none" stroke="#d8e040" stroke-width="2.600"/><path d="M1232 838C1255 855 1290 866 1325 868" fill="none" stroke="#e86a30" stroke-width="2"/><path d="M1270 861C1290 866 1310 868 1325 868" fill="none" stroke="#9030c0" stroke-width="1.600"/><path d="M1282 748C1290 755 1293 760 1297 772" fill="none" stroke="#c03070" stroke-width="2"/><path d="M1152.600 797.700L1214.600 814.500L1221.300 834.600L1194.500 844.600L1144.200 838Z" fill="#76aabe" opacity=".92"/><path d="M1266.500 814.500L1310 824.500L1321.800 864.700L1301.700 854.700L1275 841.300Z" fill="#7aaec2" opacity=".92"/><path d="M1310 824.500L1321.800 864.700L1316 845Z" fill="#9ccadb"/><path d="M1226 803C1226 795 1262 795 1262 803L1262 835C1262 843 1252 843 1252 850L1252 855C1252 860 1238 860 1238 855L1238 848C1238 842 1226 842 1226 835Z" fill="#5f97af"/><path d="M1230 796C1232 806 1258 806 1261 796L1262 808C1258 814 1234 814 1229 808Z" fill="#25a8e2"/><path d="M1238 814l16 8-3 14-13-9z" fill="#22a6e2"/><ellipse cx="1271.600" cy="874.800" rx="13" ry="6.500" fill="#c8f2fb" opacity=".9"/><ellipse cx="1271.600" cy="874.800" rx="26" ry="12" fill="#9fe0f0" opacity=".25"/><path d="M1451 413C1447.2 410.4 1434.8 401.5 1427 397C1419.2 392.5 1410.0 388.0 1402 385C1394.0 382.0 1385.0 379.3 1377 378C1369.0 376.7 1357.9 376.7 1352 377C1346.1 377.3 1342.9 378.6 1340 380C1337.1 381.4 1340.1 385.8 1334 386C1327.9 386.2 1319.3 380.0 1302 381C1284.7 382.0 1248.2 389.5 1226 392.5C1203.8 395.5 1186.2 398.3 1163 400C1139.8 401.7 1099.1 401.6 1081 403C1062.9 404.4 1057.8 406.6 1050 409C1042.2 411.4 1036.5 414.6 1032 418C1027.5 421.4 1023.6 428.1 1022 430C1025.7 431.6 1036.5 437.1 1045 440C1053.5 442.9 1063.3 445.5 1075 448C1086.7 450.5 1106.8 452.8 1118 455.5C1129.2 458.2 1137.3 461.6 1145 465C1152.7 468.4 1157.0 472.8 1166 477C1175.0 481.2 1187.4 486.8 1201 491C1214.6 495.2 1234.8 500.4 1251 503C1267.2 505.6 1288.7 507.0 1302 507C1315.3 507.0 1326.0 505.6 1334 503C1342.0 500.4 1342.7 494.5 1352 491C1361.3 487.5 1380.3 484.0 1392 481C1403.7 478.0 1416.2 475.7 1425 472C1433.8 468.3 1443.5 460.2 1447 458L1451 413Z" fill="url(#wtop)"/><g clip-path="url(#ctop)"><path d="M1166 477C1190 440 1260 425 1300 420C1335 415 1345 440 1352 491L1334 503L1302 507L1251 503L1201 491Z" fill="#1a86c2" opacity=".5"/><path d="M1166 400C1200 410 1260 405 1302 392L1302 381L1226 392.500L1163 400Z" fill="#55bbe8" opacity=".55"/><path d="M1022 430C1040 412 1060 406 1100 403L1123 430L1123 456L1075 448Z" fill="#1f80b8" opacity=".22"/><path d="M1304 415L1333 415L1332 510L1302 510Z" fill="#7fcdee" opacity=".35"/><rect x="1015" y="370" width="445" height="145" filter="url(#mott)" opacity=".3"/><rect x="1015" y="370" width="445" height="145" filter="url(#mottd)" opacity=".35"/><path d="M1320 370L1460 370L1460 500L1320 500Z" fill="url(#rdark)"/><g fill="none" stroke="#f0fbff" stroke-width="1.300" opacity=".95" stroke-linejoin="round"><path d="M1349 405L1364 411"/><path d="M1361 398L1367 398"/><path d="M1377 400L1386 406"/><path d="M1381 424L1397 421"/><path d="M1401.700 400.400L1412 405L1425 399L1417 397.800Z"/><path d="M1408 431C1418 424 1434 421 1440 426C1443 432 1430 438 1418 441C1410 440 1411 434 1408 431Z"/><path d="M1378 451C1390 452 1400 452 1411 451C1420 449 1436 443 1447 441C1448 446 1440 451 1430 454C1424 456 1420 458 1417 458C1413 457 1412 455 1411 454"/><path d="M1340 452.600C1345 450 1360 449 1373 446C1380 443 1386 440 1391 438C1398 435 1404 434 1407 433C1412 430 1414 425 1415 421"/><path d="M1362.600 470.800C1364 467 1367 465 1370 464C1374 464 1378 466 1379.500 468C1378 470 1375 472 1373 472Z"/><path d="M1370 490C1374 487 1378 486 1383 485C1390 483 1398 482 1404 481C1403 484 1401 485 1399 486.500C1392 488 1384 490 1378 491.700Z"/><path d="M1418 446C1425 442 1436 440 1442 442C1440 447 1430 450 1420 450Z"/><path d="M1362 436l3 -3M1366 442l2 -1M1432 417l3 1"/></g><g fill="none" stroke="#134e72" stroke-width="2.500" opacity=".35" stroke-linecap="round"><path d="M1343 415L1359 417"/><path d="M1387 417L1394 412"/><path d="M1316 450l4 1"/><path d="M1412 446C1420 440 1432 436 1444 436"/><path d="M1385 462C1400 458 1420 456 1436 450"/></g></g><path d="M1145 465C1148.4 466.9 1157.0 472.8 1166 477C1175.0 481.2 1187.4 486.8 1201 491C1214.6 495.2 1234.8 500.4 1251 503C1267.2 505.6 1288.7 507.0 1302 507C1315.3 507.0 1326.0 505.6 1334 503C1342.0 500.4 1342.7 494.5 1352 491C1361.3 487.5 1380.3 484.0 1392 481C1403.7 478.0 1416.2 475.7 1425 472C1433.8 468.3 1443.5 460.2 1447 458" fill="none" stroke="#9fe0f8" stroke-width="1.800" opacity=".9"/><path d="M1022 430C1025.7 431.6 1036.5 437.1 1045 440C1053.5 442.9 1063.3 445.5 1075 448C1086.7 450.5 1106.8 452.8 1118 455.5C1129.2 458.2 1140.7 463.5 1145 465" fill="none" stroke="#2a86b8" stroke-width="1.200" opacity=".6"/><path d="M1022 430C1025.7 431.6 1036.5 437.1 1045 440C1053.5 442.9 1063.3 445.5 1075 448C1086.7 450.5 1106.8 452.8 1118 455.5C1129.2 458.2 1137.3 461.6 1145 465C1152.7 468.4 1162.6 475.1 1166 477" fill="none" stroke="#6ccaf0" stroke-width="4" opacity=".55" transform="translate(0 -2.500)"/><path d="M1170 455C1200 450 1250 445 1285 437" fill="none" stroke="#35d0f0" stroke-width="1.600" opacity=".8"/><path d="M1218 480L1250 458" fill="none" stroke="#35d0f0" stroke-width="1.600" opacity=".8"/><path d="M1315 466C1340 466 1360 470 1380 478" fill="none" stroke="#6fe0f4" stroke-width="1.500" opacity=".8"/><path d="M1114 300C1114 295.500 1157.600 295.500 1157.600 300L1166 477L1123 453Z" fill="url(#rod)"/><ellipse cx="1135.800" cy="299" rx="21.800" ry="3.300" fill="#8d9191"/></g></svg>
<div class="t" style="top:174.5px;left:697px;font-size:13px;line-height:18px;color:#333;letter-spacing:-0.33px;">Graphics</div>
<div class="t" style="top:174.5px;left:774.6px;font-size:13px;line-height:18px;color:#2a6fbf;letter-spacing:-0.22px;">Water Surface</div>
<svg style="position:absolute;left:862.5px;top:179px;" width="9" height="9" viewBox="0 0 9 9"><path d="M.500 .500l8 8M8.500 .500l-8 8" stroke="#9a9a9a" stroke-width="1"/></svg>
<div style="position:absolute;left:684px;top:198.5px;width:1226px;height:1px;background:#d4d7dc"></div>
<div style="position:absolute;left:770px;top:197px;width:109px;height:2px;background:#2a6fbf"></div>
<svg style="position:absolute;left:1868px;top:179px;" width="9" height="6" viewBox="0 0 9 6"><path d="M0 .500h9l-4.500 5z" fill="#a9acb2"/></svg><svg style="position:absolute;left:1882px;top:177px;" width="9" height="9" viewBox="0 0 9 9"><rect x=".500" y=".500" width="8" height="7" fill="none" stroke="#a9acb2" stroke-width="1"/><path d="M.500 1h8" stroke="#a9acb2" stroke-width="1.500"/></svg><svg style="position:absolute;left:1898px;top:176.5px;" width="8" height="11" viewBox="0 0 8 11"><path d="M2 0h4v4.500l1.500 1.500h-7l1.500-1.500zM3.600 6h.800v4.500h-.800z" fill="#a9acb2"/></svg>
<svg style="position:absolute;left:689.5px;top:202px;" width="18" height="18" viewBox="0 0 18 18"><circle cx="7.500" cy="7.500" r="5.200" fill="none" stroke="#2e82cc" stroke-width="1.500"/><path d="M11.300 11.300l4.700 4.700" stroke="#2e82cc" stroke-width="2"/><path d="M5 7.500h5M7.500 5v5" stroke="#2e82cc" stroke-width="1.300"/></svg>
<svg style="position:absolute;left:712.5px;top:202px;" width="18" height="18" viewBox="0 0 18 18"><circle cx="7.500" cy="7.500" r="5.200" fill="none" stroke="#2e82cc" stroke-width="1.500"/><path d="M11.300 11.300l4.700 4.700" stroke="#2e82cc" stroke-width="2"/><path d="M5 7.500h5" stroke="#2e82cc" stroke-width="1.300"/></svg>
<svg style="position:absolute;left:735.8px;top:202px;" width="18" height="18" viewBox="0 0 18 18"><rect x="1" y="4" width="10" height="10" fill="none" stroke="#2e82cc" stroke-width="1" stroke-dasharray="2 1.500"/><circle cx="9.500" cy="8" r="4.500" fill="#f9fafd" stroke="#2e82cc" stroke-width="1.400"/><path d="M7.500 8h4M9.500 6v4" stroke="#2e82cc" stroke-width="1.100"/><path d="M12.800 11.300l4 4" stroke="#2e82cc" stroke-width="1.800"/></svg>
<svg style="position:absolute;left:758.7px;top:208.5px;" width="8" height="5" viewBox="0 0 8 5"><path d="M.500 .500h7l-3.500 4z" fill="#222"/></svg>
<svg style="position:absolute;left:776.3px;top:202px;" width="18" height="18" viewBox="0 0 18 18"><rect x="2" y="2" width="14" height="14" fill="#fff" stroke="#6a6a6a" stroke-width="1.100"/><path d="M9 4v10M4 9h10" stroke="#2e82cc" stroke-width="1.200"/><path d="M9 3l2 2.500h-4zM9 15l2-2.500h-4zM3 9l2.500-2v4zM15 9l-2.500-2v4z" fill="#2e82cc"/></svg>
<div style="position:absolute;left:801.5px;top:203px;width:1px;height:16px;background:#d0d3d8"></div>
<svg style="position:absolute;left:807.8px;top:202px;" width="18" height="18" viewBox="0 0 18 18"><path d="M9 15v-12" stroke="#2e82cc" stroke-width="1.200"/><path d="M9 .800l1.800 3h-3.600z" fill="#2e82cc"/><path d="M9 15l-5.500-5.500" stroke="#3aa04a" stroke-width="1.200"/><path d="M2.300 8.300l3 .500-2.300 2.300z" fill="#3aa04a"/><path d="M9 15l6.500-5" stroke="#e0245e" stroke-width="1.200"/><path d="M17 8.800l-3.200.300 1.800 2.400z" fill="#e0245e"/></svg>
<svg style="position:absolute;left:830.6px;top:208.5px;" width="8" height="5" viewBox="0 0 8 5"><path d="M.500 .500h7l-3.500 4z" fill="#222"/></svg>
<svg style="position:absolute;left:848.6px;top:202px;" width="18" height="18" viewBox="0 0 18 18"><path d="M3 15h14" fill="none" stroke="#e0245e" stroke-width="1.200"/><path d="M3 1v14.600" stroke="#3aa04a" stroke-width="1.200"/><path d="M3 0l1.800 2.500h-3.600z" fill="#3aa04a"/><path d="M18 15l-2.500-1.800v3.600z" fill="#e0245e"/><text x="5.500" y="9.500" font-size="9.500" font-family="Liberation Sans,sans-serif" fill="#8a8a8a">xy</text></svg>
<svg style="position:absolute;left:872px;top:202px;" width="18" height="18" viewBox="0 0 18 18"><path d="M3 15h14" fill="none" stroke="#3aa04a" stroke-width="1.200"/><path d="M3 1v14.600" stroke="#2e82cc" stroke-width="1.200"/><path d="M3 0l1.800 2.500h-3.600z" fill="#2e82cc"/><path d="M18 15l-2.500-1.800v3.600z" fill="#3aa04a"/><text x="5.500" y="9.500" font-size="9.500" font-family="Liberation Sans,sans-serif" fill="#8a8a8a">yz</text></svg>
<svg style="position:absolute;left:895.3px;top:202px;" width="18" height="18" viewBox="0 0 18 18"><path d="M3 15h14" fill="none" stroke="#e0245e" stroke-width="1.200"/><path d="M3 1v14.600" stroke="#2e82cc" stroke-width="1.200"/><path d="M3 0l1.800 2.500h-3.600z" fill="#2e82cc"/><path d="M18 15l-2.500-1.800v3.600z" fill="#e0245e"/><text x="5.500" y="9.500" font-size="9.500" font-family="Liberation Sans,sans-serif" fill="#8a8a8a">xz</text></svg>
<div style="position:absolute;left:919.9px;top:203px;width:1px;height:16px;background:#d0d3d8"></div>
<svg style="position:absolute;left:926.1px;top:202px;" width="18" height="18" viewBox="0 0 18 18"><path d="M14.500 10a5.800 5.800 0 1 1-3.500-5.300" fill="none" stroke="#2e82cc" stroke-width="1.500"/><path d="M8.500 1.500l5 3-4.500 3.500z" fill="#2e82cc"/></svg>
<svg style="position:absolute;left:947.6px;top:208.5px;" width="8" height="5" viewBox="0 0 8 5"><path d="M.500 .500h7l-3.500 4z" fill="#222"/></svg>
<div style="position:absolute;left:967.5px;top:203px;width:1px;height:16px;background:#d0d3d8"></div>
<div style="position:absolute;left:972.8px;top:201px;width:20px;height:20px;background:#c5e0f7;border:1px solid #97c7ee;box-sizing:border-box;border-radius:2px"></div>
<div style="position:absolute;left:995.8px;top:201px;width:20px;height:20px;background:#c5e0f7;border:1px solid #97c7ee;box-sizing:border-box;border-radius:2px"></div>
<div style="position:absolute;left:1019.1px;top:201px;width:20px;height:20px;background:#c5e0f7;border:1px solid #97c7ee;box-sizing:border-box;border-radius:2px"></div>
<div style="position:absolute;left:1042.1px;top:201px;width:20px;height:20px;background:#c5e0f7;border:1px solid #97c7ee;box-sizing:border-box;border-radius:2px"></div>
<div style="position:absolute;left:1065.1px;top:201px;width:20px;height:20px;background:#c5e0f7;border:1px solid #97c7ee;box-sizing:border-box;border-radius:2px"></div>
<svg style="position:absolute;left:973.8px;top:202px;" width="18" height="18" viewBox="0 0 18 18"><path d="M3 7h3l5.500-3.500v11l-5.500-3.500h-3z" fill="#2e82cc"/><path d="M12.500 6.500a3 3 0 0 1 0 5" fill="none" stroke="#2e82cc" stroke-width="1.300"/></svg>
<svg style="position:absolute;left:996.8px;top:202px;" width="18" height="18" viewBox="0 0 18 18"><rect x="2" y="3" width="11" height="9.500" rx="1.500" fill="#d7e7f7" stroke="#6f7f92" stroke-width="1"/><rect x="5" y="5.500" width="11" height="9.500" rx="1" fill="#c3d9f1" stroke="#6f7f92" stroke-width="1"/><path d="M2.500 3.500l3 2.500M13 3.500l3 2.500M2.500 12.500l3 2.500" stroke="#6f7f92" stroke-width=".800"/></svg>
<svg style="position:absolute;left:1020.1px;top:202px;" width="18" height="18" viewBox="0 0 18 18"><rect x="2" y="2" width="14" height="14" fill="#e3effb" stroke="#6a6a6a" stroke-width="1.100"/><path d="M6.700 4v10M9.700 4v10M12.700 4v10M4 6.300h10.500M4 9.300h10.500M4 12.300h10.500M4 4h10.500v10.500h-10.500z" fill="none" stroke="#2e82cc" stroke-width="1"/></svg>
<svg style="position:absolute;left:1043.1px;top:202px;" width="18" height="18" viewBox="0 0 18 18"><rect x="2" y="2" width="14" height="14" fill="#e3effb" stroke="#6a6a6a" stroke-width="1.100"/><path d="M9 12v-7" stroke="#2e82cc" stroke-width="1.100"/><path d="M9 3.800l1.500 2.200h-3z" fill="#2e82cc"/><path d="M9 12l-4-2.500" stroke="#3aa04a" stroke-width="1.100"/><path d="M9 12l4.500-2.500" stroke="#e0245e" stroke-width="1.100"/></svg>
<svg style="position:absolute;left:1066.1px;top:202px;" width="18" height="18" viewBox="0 0 18 18"><defs><linearGradient id="cbi" x1="0" y1="0" x2="0" y2="1"><stop offset="0" stop-color="#2e6fd0"/><stop offset=".35" stop-color="#f0c030"/><stop offset="1" stop-color="#e03030"/></linearGradient></defs><rect x="2" y="2" width="14" height="14" fill="#e3effb" stroke="#6a6a6a" stroke-width="1.100"/><rect x="11.500" y="3.500" width="3" height="11" fill="url(#cbi)"/></svg>
<div style="position:absolute;left:1091px;top:203px;width:1px;height:16px;background:#d0d3d8"></div>
<svg style="position:absolute;left:1096.9px;top:202px;" width="18" height="18" viewBox="0 0 18 18"><rect x="4" y="8" width="10" height="8" rx="1" fill="#2e82cc"/><path d="M6 8v-2a3 3 0 0 1 6 0v2" fill="none" stroke="#2e82cc" stroke-width="1.600"/></svg>
<div style="position:absolute;left:1121.5px;top:203px;width:1px;height:16px;background:#d0d3d8"></div>
<svg style="position:absolute;left:1128px;top:202px;" width="18" height="18" viewBox="0 0 18 18"><path d="M9 1.500c5 0 8 3 8 6.500s-3 4-5 3.500-2.500 1-1.500 2.500-1 3-3 3c-4 0-6.500-3.500-6.500-7.500s3-8 8-8z" fill="#f1f1f1" stroke="#6a6a6a" stroke-width="1.100"/><circle cx="5.500" cy="7" r="1.400" fill="#e0452c"/><circle cx="9" cy="4.500" r="1.400" fill="#f0b030"/><circle cx="13" cy="6.500" r="1.400" fill="#3a9a4a"/><circle cx="5" cy="11" r="1.400" fill="#2e82cc"/><path d="M9 14l7-7 1.500 1.500-7 7z" fill="#f0a848"/></svg>
<svg style="position:absolute;left:1149.9px;top:208.5px;" width="8" height="5" viewBox="0 0 8 5"><path d="M.500 .500h7l-3.500 4z" fill="#222"/></svg>
<div style="position:absolute;left:1169.5px;top:203px;width:1px;height:16px;background:#d0d3d8"></div>
<svg style="position:absolute;left:1176px;top:202px;" width="18" height="18" viewBox="0 0 18 18"><circle cx="9" cy="9" r="6.300" fill="none" stroke="#2e82cc" stroke-width="3.400" stroke-dasharray="5.200 1.400"/></svg>
<svg style="position:absolute;left:1198.5px;top:208.5px;" width="8" height="5" viewBox="0 0 8 5"><path d="M.500 .500h7l-3.500 4z" fill="#222"/></svg>
<svg style="position:absolute;left:1216.9px;top:202px;" width="18" height="18" viewBox="0 0 18 18"><path d="M1 5h3.500l1.500-2h6l1.500 2h3.500v10h-16z" fill="#2e82cc"/><circle cx="9" cy="9.800" r="3.300" fill="#f9fafd"/><circle cx="9" cy="9.800" r="2" fill="#2e82cc"/></svg>
<svg style="position:absolute;left:1239.9px;top:202px;" width="18" height="18" viewBox="0 0 18 18"><rect x="4.500" y="1.500" width="9" height="5" fill="#fafbfe" stroke="#2e82cc" stroke-width="1.200"/><rect x="1.600" y="6" width="14.800" height="7" rx="1.500" fill="#bcd8f2" stroke="#2e82cc" stroke-width="1.200"/><rect x="4.500" y="10.500" width="9" height="6" fill="#fafbfe" stroke="#2e82cc" stroke-width="1.200"/></svg>
<div class="t" style="top:236.5px;left:701px;font-size:12.5px;color:#111;font-family:'DejaVu Sans','Liberation Sans',sans-serif;letter-spacing:-0.24px;">Time=5.5 s</div>
<div class="t" style="top:389.5px;left:872px;color:#111;font-family:'DejaVu Sans','Liberation Sans',sans-serif;letter-spacing:-0.03px;">0.6</div>
<div class="t" style="top:579.5px;left:901px;color:#111;font-family:'DejaVu Sans','Liberation Sans',sans-serif;letter-spacing:-0.03px;">0.4</div>
<div class="t" style="top:738.5px;left:926px;color:#111;font-family:'DejaVu Sans','Liberation Sans',sans-serif;letter-spacing:-0.03px;">0.2</div>
<div class="t" style="top:623px;left:885px;font-size:10.5px;color:#111;font-family:'DejaVu Sans','Liberation Sans',sans-serif;">m</div>
<div class="t" style="top:916.5px;left:987px;color:#111;font-family:'DejaVu Sans','Liberation Sans',sans-serif;letter-spacing:0.02px;">-0.2</div>
<div class="t" style="top:849.5px;left:1466px;color:#111;font-family:'DejaVu Sans','Liberation Sans',sans-serif;letter-spacing:-0.03px;">0.2</div>
<div class="t" style="top:892.5px;left:1438px;color:#111;font-family:'DejaVu Sans','Liberation Sans',sans-serif;letter-spacing:-0.03px;">0.1</div>
<div class="t" style="top:941.5px;left:1408px;color:#111;font-family:'DejaVu Sans','Liberation Sans',sans-serif;letter-spacing:0.37px;">0</div>
<div style="position:absolute;left:1040px;top:945px;width:50px;height:13px;overflow:hidden"><div class="t" style="left:12px;top:3.500px;font-family:'DejaVu Sans',sans-serif;color:#111;letter-spacing:0px">0.1</div></div>
<div class="t" style="top:871.5px;left:725.3px;color:#111;font-family:'DejaVu Sans','Liberation Sans',sans-serif;">y</div>
<div class="t" style="top:892.5px;left:746.8px;color:#111;font-family:'DejaVu Sans','Liberation Sans',sans-serif;">x</div>
<div class="t" style="top:914px;left:757px;color:#111;font-family:'DejaVu Sans','Liberation Sans',sans-serif;">z</div>
<svg style="position:absolute;left:720px;top:880px;" width="45" height="50" viewBox="0 0 45 50"><path d="M7.900 34.500v-19" stroke="#4caa4c" stroke-width="2"/><path d="M7.900 8.400l3.100 8.200h-6.200z" fill="#4caa4c"/><path d="M7.900 34.500l10-6.200" stroke="#e0245e" stroke-width="2"/><path d="M23.800 24.800l-3.800 6.300-3.700-5.200z" fill="#e0245e"/><path d="M7.900 34.500l18 4.700" stroke="#4a86c8" stroke-width="2"/><path d="M32.500 41.200l-8.600 1.200 1.600-6z" fill="#4a86c8"/></svg>
<div style="position:absolute;left:1838px;top:305px;width:17px;height:618.5px;box-sizing:border-box;border:1px solid #555;background:linear-gradient(to bottom,#5a0a70 0%,#7a0868 5%,#b00040 12%,#d00820 17%,#f02008 21%,#fb5a04 26%,#ff8a00 30%,#fbb808 34%,#f2dc18 37.500%,#d6ee2a 41%,#aef050 46%,#7af285 51%,#48f4b8 55.500%,#22eee4 60%,#24d4fa 66%,#48b4fc 72%,#7698fc 78%,#9e90f8 84%,#c2b8f2 90%,#e0d8f2 95%,#efe9f6 100%)"></div>
<div style="position:absolute;left:1839px;top:435px;width:3px;height:1px;background:#222"></div>
<div style="position:absolute;left:1851px;top:435px;width:3px;height:1px;background:#222"></div>
<div style="position:absolute;left:1839px;top:604px;width:3px;height:1px;background:#222"></div>
<div style="position:absolute;left:1851px;top:604px;width:3px;height:1px;background:#222"></div>
<div style="position:absolute;left:1839px;top:773px;width:3px;height:1px;background:#222"></div>
<div style="position:absolute;left:1851px;top:773px;width:3px;height:1px;background:#222"></div>
<div class="t" style="top:262.5px;left:1854px;color:#111;font-family:'DejaVu Sans','Liberation Sans',sans-serif;letter-spacing:0.17px;">m/s</div>
<div class="t" style="top:427.5px;left:1863.5px;color:#111;font-family:'DejaVu Sans','Liberation Sans',sans-serif;">2</div>
<div class="t" style="top:596.5px;left:1863.5px;color:#111;font-family:'DejaVu Sans','Liberation Sans',sans-serif;">1</div>
<div class="t" style="top:765.5px;left:1863.5px;color:#111;font-family:'DejaVu Sans','Liberation Sans',sans-serif;letter-spacing:-0.19px;">0.5</div>
<svg style="position:absolute;left:1884px;top:228px;" width="21" height="21" viewBox="0 0 21 21"><path d="M2 4l16-3 2 14-15 5z" fill="#e4e7ec"/><rect x="4.500" y="5" width="12" height="10" rx="2" fill="#2a4a9a"/><rect x="6" y="6.500" width="9" height="7" rx="1" fill="#f0d860"/><path d="M6 6.500h4l-1 7h-3z" fill="#6aa8e8"/></svg>
<div class="p" style="position:absolute;left:684px;top:966px;width:1226px;height:77px;"></div>
<div class="t" style="top:972.5px;left:696.2px;font-size:13px;line-height:18px;color:#2a6fbf;letter-spacing:-0.09px;">Messages</div>
<svg style="position:absolute;left:763.5px;top:977px;" width="9" height="9" viewBox="0 0 9 9"><path d="M.500 .500l8 8M8.500 .500l-8 8" stroke="#9a9a9a" stroke-width="1"/></svg>
<div class="t" style="top:972.5px;left:802px;font-size:13px;line-height:18px;color:#333;letter-spacing:-0.06px;">Progress</div>
<div class="t" style="top:972.5px;left:881px;font-size:13px;line-height:18px;color:#333;letter-spacing:0.10px;">Log</div>
<div class="t" style="top:972.5px;left:930px;font-size:13px;line-height:18px;color:#333;letter-spacing:-0.02px;">Table</div>
<svg style="position:absolute;left:968.5px;top:977px;" width="9" height="9" viewBox="0 0 9 9"><path d="M.500 .500l8 8M8.500 .500l-8 8" stroke="#9a9a9a" stroke-width="1"/></svg>
<div style="position:absolute;left:684px;top:997px;width:1226px;height:1px;background:#d8d9de"></div>
<div style="position:absolute;left:692px;top:995.5px;width:87px;height:2px;background:#2a6fbf"></div>
<svg style="position:absolute;left:1868px;top:977.5px;" width="9" height="6" viewBox="0 0 9 6"><path d="M0 .500h9l-4.500 5z" fill="#a9acb2"/></svg><svg style="position:absolute;left:1882px;top:975.5px;" width="9" height="9" viewBox="0 0 9 9"><rect x=".500" y=".500" width="8" height="7" fill="none" stroke="#a9acb2" stroke-width="1"/><path d="M.500 1h8" stroke="#a9acb2" stroke-width="1.500"/></svg><svg style="position:absolute;left:1898px;top:975px;" width="8" height="11" viewBox="0 0 8 11"><path d="M2 0h4v4.500l1.500 1.500h-7l1.500-1.500zM3.600 6h.800v4.500h-.800z" fill="#a9acb2"/></svg>
<svg style="position:absolute;left:692px;top:1001px;" width="14" height="17" viewBox="0 0 14 17"><path d="M2 1l5 9" stroke="#555" stroke-width="1.600"/><path d="M4.500 9.500l4-1.800 3.500 8-5.500 1z" fill="#f0a848"/></svg>
<div style="position:absolute;left:712px;top:999.5px;width:20px;height:20px;background:#c5e0f7;border:1px solid #97c7ee;box-sizing:border-box;border-radius:2px"></div>
<svg style="position:absolute;left:714px;top:1002px;" width="16" height="15" viewBox="0 0 16 15"><rect x=".600" y=".600" width="11" height="9" fill="#fff" stroke="#2e6fb0" stroke-width="1.100"/><path d="M.600 2.800h11" stroke="#2e6fb0" stroke-width="1.200"/><rect x="4.600" y="5.600" width="10.500" height="8" fill="#fff" stroke="#2e6fb0" stroke-width="1.100"/><path d="M4.600 5.600l5.200 4 5.200-4" fill="none" stroke="#2e6fb0" stroke-width="1"/></svg>
<div class="in" style="position:absolute;left:688px;top:1022.5px;width:1218px;height:16.5px;background:#fafbfe;border-color:#d0d0d4"></div>
<div style="position:absolute;left:1888px;top:1023.5px;width:17px;height:14.5px;background:#f3f3f5"></div>
<div class="t" style="top:1051.5px;left:1235px;color:#222;letter-spacing:-0.58px;">3.02 GB | 5.14 GB</div>
</body></html>
